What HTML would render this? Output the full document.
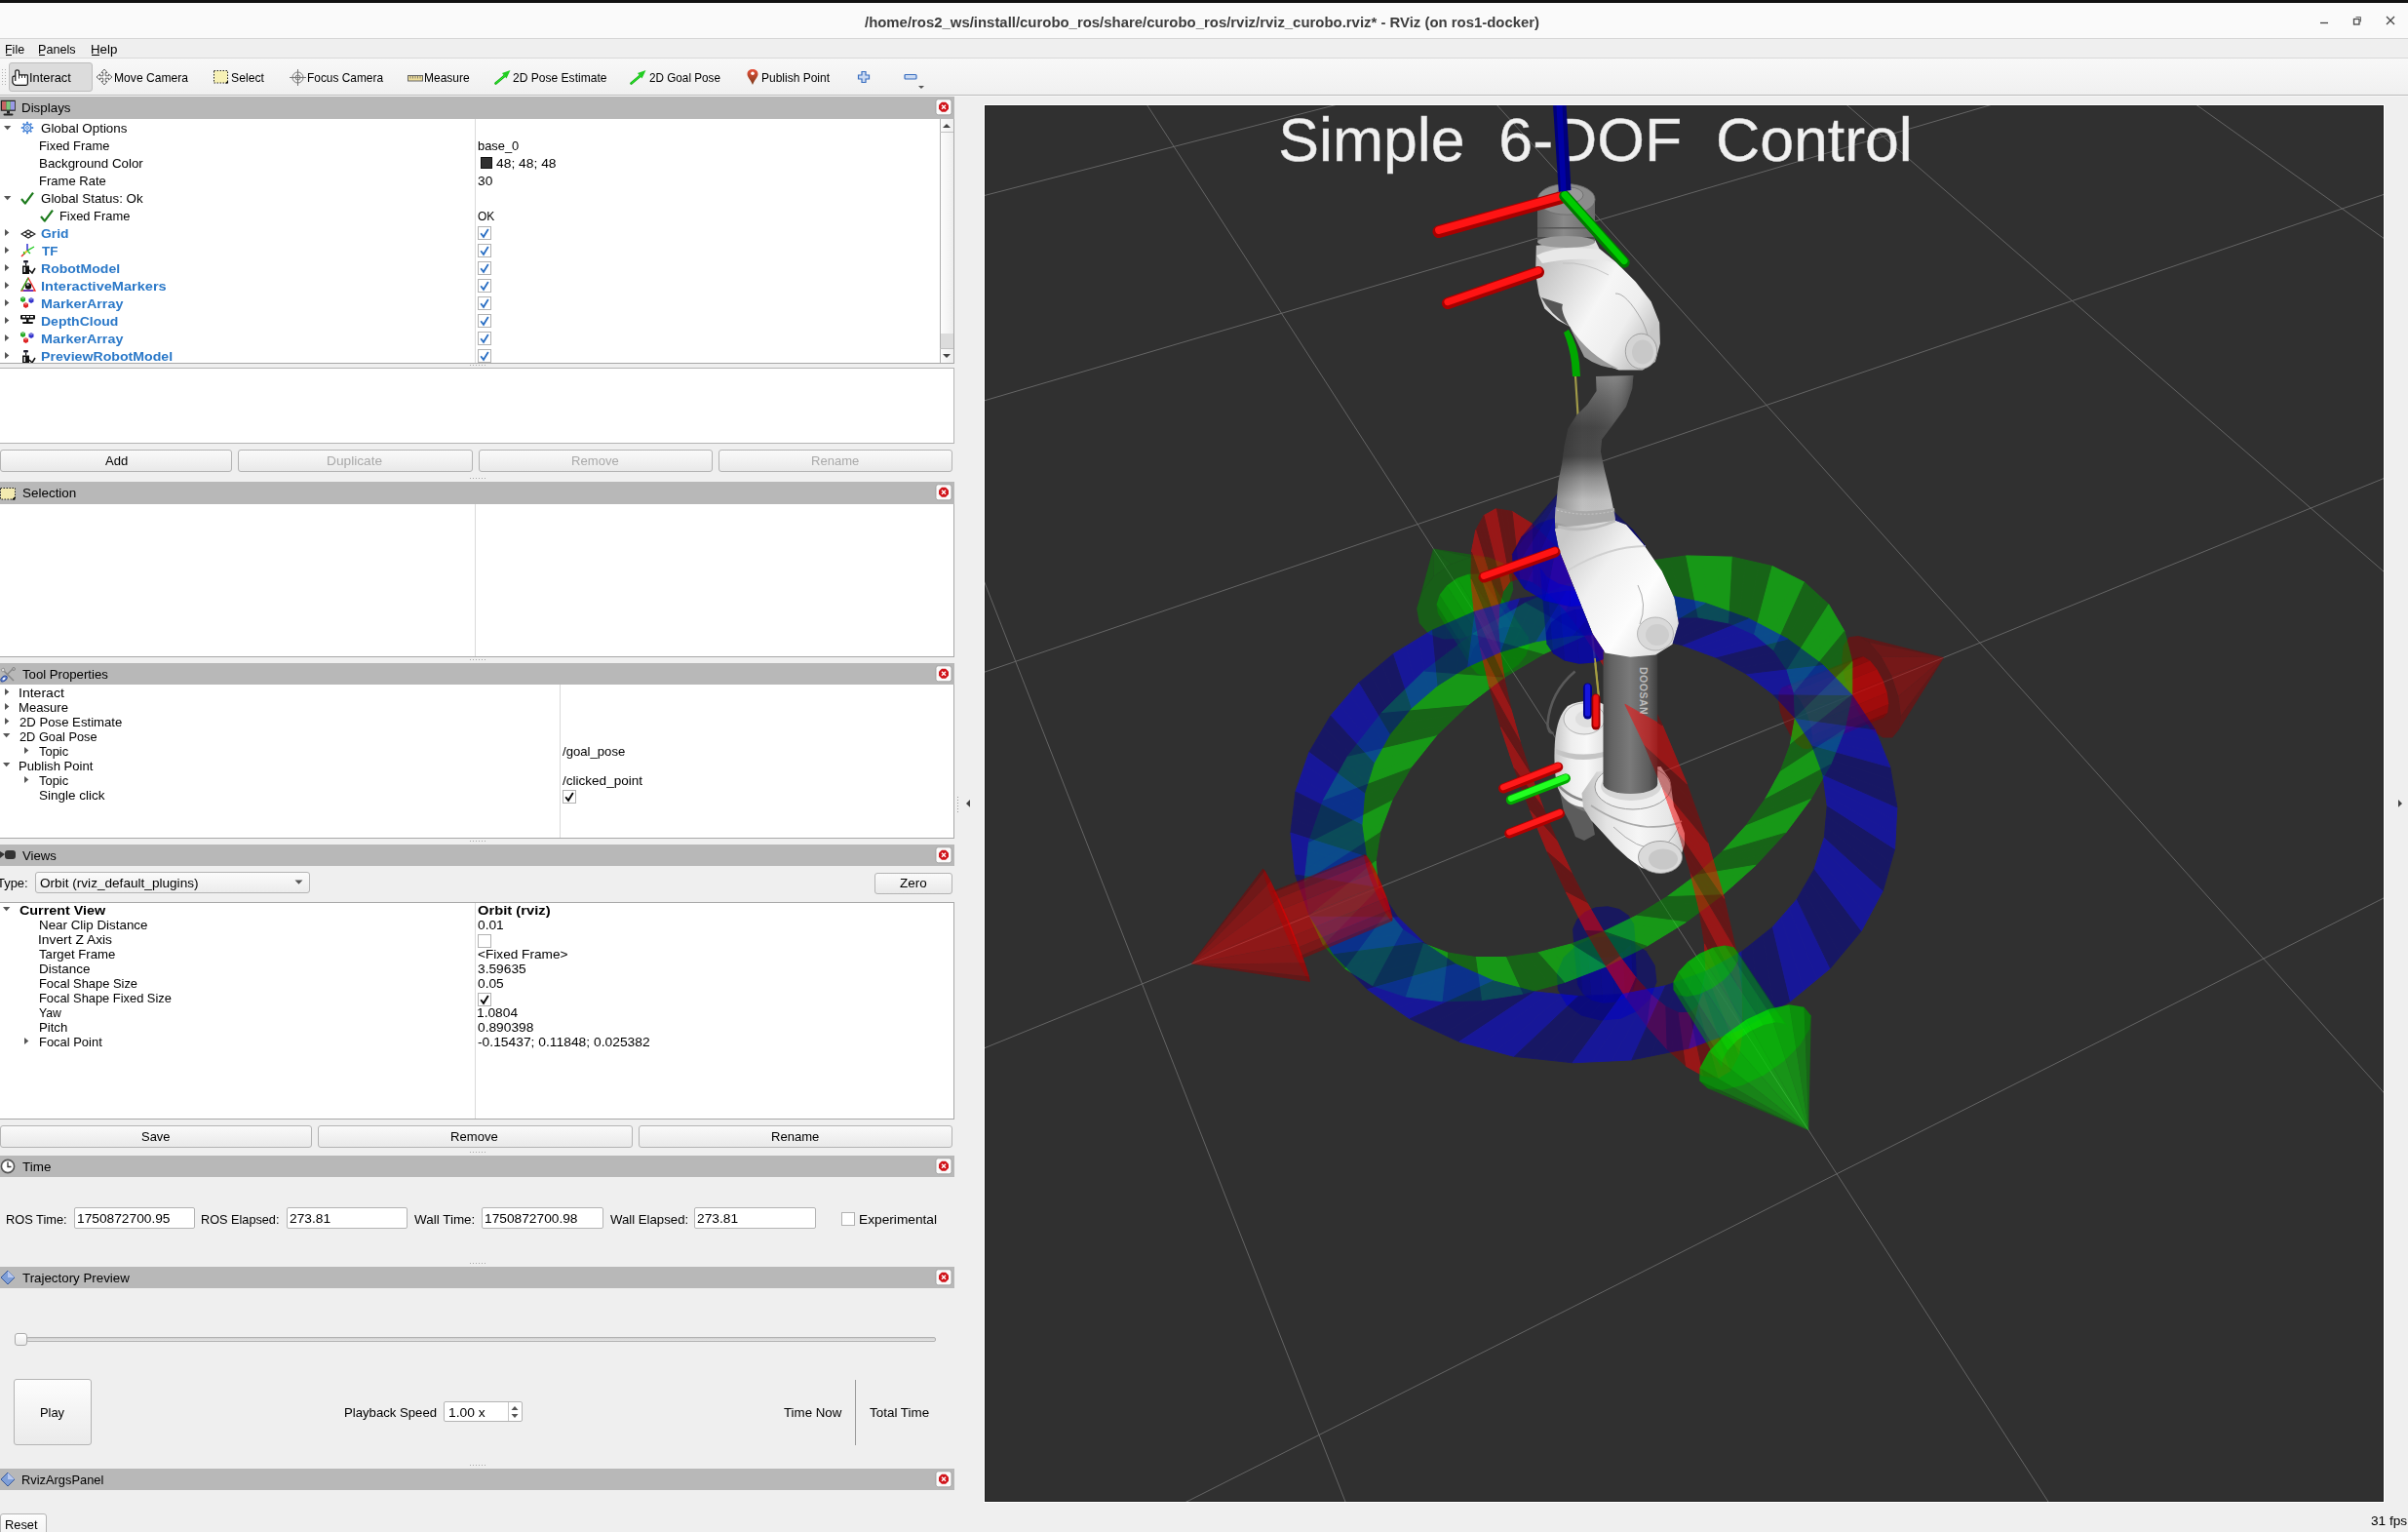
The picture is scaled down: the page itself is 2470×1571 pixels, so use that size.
<!DOCTYPE html>
<html><head><meta charset="utf-8"><style>
html,body{margin:0;padding:0;}
body{width:2470px;height:1571px;position:relative;overflow:hidden;background:#efefef;font-family:"Liberation Sans",sans-serif;}
body>div{position:absolute;}
.t{position:absolute;white-space:pre;transform-origin:0 0;}
div>div{position:absolute;}
</style></head><body>
<div style="left:0px;top:0px;width:2470px;height:3px;background:#121212"></div>
<div style="left:0px;top:3px;width:2470px;height:36px;background:#fafafa"></div>
<div style="left:0px;top:39px;width:2470px;height:1px;background:#d6d6d6"></div>
<div class="t" style="left:886.5px;top:14.50px;font-size:15px;line-height:15px;font-weight:bold;color:#3d3d3d;transform:scaleX(0.9939)">/home/ros2_ws/install/curobo_ros/share/curobo_ros/rviz/rviz_curobo.rviz* - RViz (on ros1-docker)</div>
<svg style="position:absolute;left:2370px;top:10px" width="100" height="25"><g stroke="#474747" fill="none" stroke-width="1.3"><line x1="10" y1="13.5" x2="18" y2="13.5"/><rect x="44.5" y="9.5" width="5.5" height="5.5"/><polyline points="46.5,7.5 51.5,7.5 51.5,12.5" stroke-width="0.8"/><line x1="78" y1="7" x2="86" y2="15"/><line x1="86" y1="7" x2="78" y2="15"/></g></svg>
<div style="left:0px;top:40px;width:2470px;height:19px;background:#efefef"></div>
<div style="left:0px;top:59px;width:2470px;height:1px;background:#d9d9d9"></div>
<div class="t" style="left:5.18px;top:43.50px;font-size:13.0px;line-height:13.0px;color:#000;transform:scaleX(0.9586);">File</div>
<div style="left:6px;top:56px;width:6px;height:1px;background:#000"></div>
<div class="t" style="left:39.16px;top:43.50px;font-size:13.0px;line-height:13.0px;color:#000;transform:scaleX(0.9722);">Panels</div>
<div style="left:40px;top:56px;width:6px;height:1px;background:#000"></div>
<div class="t" style="left:93.11px;top:43.50px;font-size:13.0px;line-height:13.0px;color:#000;transform:scaleX(1.0239);">Help</div>
<div style="left:94px;top:56px;width:8px;height:1px;background:#000"></div>
<div style="left:0px;top:60px;width:2470px;height:37px;background:linear-gradient(#f8f8f8,#f0f0f0)"></div>
<div style="left:0px;top:97px;width:2470px;height:1px;background:#bcbcbc"></div>
<div style="left:0px;top:98px;width:2470px;height:1px;background:#f7f7f7"></div>
<svg style="position:absolute;left:0;top:68px" width="8" height="22"><rect x="2" y="3" width="1" height="1" fill="#b0b0b0"/><rect x="5" y="3" width="1" height="1" fill="#b0b0b0"/><rect x="2" y="6" width="1" height="1" fill="#b0b0b0"/><rect x="5" y="6" width="1" height="1" fill="#b0b0b0"/><rect x="2" y="9" width="1" height="1" fill="#b0b0b0"/><rect x="5" y="9" width="1" height="1" fill="#b0b0b0"/><rect x="2" y="12" width="1" height="1" fill="#b0b0b0"/><rect x="5" y="12" width="1" height="1" fill="#b0b0b0"/><rect x="2" y="15" width="1" height="1" fill="#b0b0b0"/><rect x="5" y="15" width="1" height="1" fill="#b0b0b0"/><rect x="2" y="18" width="1" height="1" fill="#b0b0b0"/><rect x="5" y="18" width="1" height="1" fill="#b0b0b0"/></svg>
<div style="left:9px;top:64px;width:86px;height:30px;background:#dcdcdc;border:1px solid #bdbdbd;border-radius:3px;box-sizing:border-box"></div>
<svg style="position:absolute;left:11.5px;top:70.5px" width="18" height="18" viewBox="0 0 18 18"><path d="M3.8 12 V2 Q3.8 0.8 5.65 0.8 Q7.5 0.8 7.5 2 V5.8 H15.6 Q16.4 5.8 16.4 6.6 V14.6 Q16.4 16.4 14.7 16.4 H4.2 Q2.8 16.4 1.9 15.2 L0.9 13.6 V8.6 Q0.9 7.2 2.3 7.2 H3.8" fill="#fff" stroke="#111" stroke-width="1.2" stroke-linejoin="round"/><path d="M7.5 5.8 V9.6 M10.5 5.8 V9 M13.5 5.8 V9" stroke="#222" stroke-width="0.9"/></svg>
<div class="t" style="left:30.01px;top:74.61px;font-size:11.92px;line-height:11.92px;color:#000;transform:scaleX(1.0794);">Interact</div>
<svg style="position:absolute;left:98px;top:70px" width="18" height="18" viewBox="0 0 18 18"><g fill="#fff" stroke="#555" stroke-width="0.9"><path d="M9 1 L12 4.5 L10.2 4.5 L10.2 7.8 L13.5 7.8 L13.5 6 L17 9 L13.5 12 L13.5 10.2 L10.2 10.2 L10.2 13.5 L12 13.5 L9 17 L6 13.5 L7.8 13.5 L7.8 10.2 L4.5 10.2 L4.5 12 L1 9 L4.5 6 L4.5 7.8 L7.8 7.8 L7.8 4.5 L6 4.5 Z"/></g></svg>
<div class="t" style="left:116.71px;top:74.61px;font-size:11.92px;line-height:11.92px;color:#000;transform:scaleX(1.0174);">Move Camera</div>
<svg style="position:absolute;left:218px;top:71px" width="18" height="16"><rect x="1.5" y="1.5" width="14" height="12.5" fill="#f7f1b5" stroke="#222" stroke-width="1" stroke-dasharray="1.5,1.5"/><path d="M13 14.5 L16 11.5 L16 14.5 Z" fill="#000"/></svg>
<div class="t" style="left:237.15px;top:74.61px;font-size:11.92px;line-height:11.92px;color:#000;transform:scaleX(1.0244);">Select</div>
<svg style="position:absolute;left:296px;top:70px" width="19" height="19" viewBox="0 0 19 19"><g fill="none" stroke="#777" stroke-width="1"><circle cx="9.5" cy="9.5" r="5.5"/><circle cx="9.5" cy="9.5" r="2.5"/><line x1="9.5" y1="1" x2="9.5" y2="18"/><line x1="1" y1="9.5" x2="18" y2="9.5"/></g></svg>
<div class="t" style="left:315.42px;top:74.61px;font-size:11.92px;line-height:11.92px;color:#000;transform:scaleX(0.9989);">Focus Camera</div>
<svg style="position:absolute;left:417px;top:76px" width="18" height="9"><rect x="1.5" y="1.5" width="15" height="5.5" fill="#eedd9a" stroke="#666" stroke-width="1"/><g stroke="#666" stroke-width="0.8"><line x1="4.0" y1="2" x2="4.0" y2="4.5"/><line x1="6.5" y1="2" x2="6.5" y2="4.5"/><line x1="9.0" y1="2" x2="9.0" y2="4.5"/><line x1="11.5" y1="2" x2="11.5" y2="4.5"/><line x1="14.0" y1="2" x2="14.0" y2="4.5"/></g></svg>
<div class="t" style="left:435.21px;top:74.61px;font-size:11.92px;line-height:11.92px;color:#000;transform:scaleX(1.0078);">Measure</div>
<svg style="position:absolute;left:507px;top:71px" width="18" height="16" viewBox="0 0 18 16"><path d="M1.5 14.5 L11 6.5" stroke="#1a1" stroke-width="2.6" stroke-linecap="round"/><path d="M16.5 1 L8 4 L12.5 9.5 Z" fill="#2c2"/><path d="M1.5 14.5 L11 6.5" stroke="#3f3" stroke-width="1"/></svg>
<div class="t" style="left:525.99px;top:74.61px;font-size:11.92px;line-height:11.92px;color:#000;transform:scaleX(1.0121);">2D Pose Estimate</div>
<svg style="position:absolute;left:646px;top:71px" width="18" height="16" viewBox="0 0 18 16"><path d="M1.5 14.5 L11 6.5" stroke="#1a1" stroke-width="2.6" stroke-linecap="round"/><path d="M16.5 1 L8 4 L12.5 9.5 Z" fill="#2c2"/><path d="M1.5 14.5 L11 6.5" stroke="#3f3" stroke-width="1"/></svg>
<div class="t" style="left:665.61px;top:74.61px;font-size:11.92px;line-height:11.92px;color:#000;transform:scaleX(0.9840);">2D Goal Pose</div>
<svg style="position:absolute;left:765px;top:70px" width="14" height="18" viewBox="0 0 14 18"><defs><linearGradient id="pin" x1="0" y1="0" x2="0" y2="1"><stop offset="0" stop-color="#e8503a"/><stop offset="1" stop-color="#7a3a1a"/></linearGradient></defs><path d="M7 17 C5 12 1.5 9 1.5 6 C1.5 2.8 4 1 7 1 C10 1 12.5 2.8 12.5 6 C12.5 9 9 12 7 17 Z" fill="url(#pin)"/><circle cx="7" cy="5.2" r="1.8" fill="#fff"/></svg>
<div class="t" style="left:781.22px;top:74.61px;font-size:11.92px;line-height:11.92px;color:#000;transform:scaleX(1.0070);">Publish Point</div>
<svg style="position:absolute;left:878px;top:71px" width="16" height="16"><path d="M6 2.5 H10 V6 H13.5 V10 H10 V13.5 H6 V10 H2.5 V6 H6 Z" fill="#c9d9f2" stroke="#3b6fc0" stroke-width="1.2"/></svg>
<svg style="position:absolute;left:926px;top:75px" width="16" height="8"><rect x="2" y="1.5" width="12" height="4.5" rx="1" fill="#c9d9f2" stroke="#3b6fc0" stroke-width="1.2"/></svg>
<svg style="position:absolute;left:941px;top:87px" width="8" height="5"><path d="M1 1 H7 L4 4 Z" fill="#555"/></svg>
<div style="left:0px;top:99px;width:979px;height:23px;background:#b8b8b8"></div>
<div class="t" style="left:22.10px;top:103.80px;font-size:13.0px;line-height:13.0px;color:#000;transform:scaleX(1.0277);">Displays</div>
<svg style="position:absolute;left:0;top:102px" width="17" height="18" viewBox="0 0 17 18"><rect x="0.8" y="0.8" width="15" height="11" fill="#222"/><rect x="2" y="2" width="4.4" height="8.6" fill="#c86464"/><rect x="6.4" y="2" width="4.4" height="8.6" fill="#7cc87c"/><rect x="10.8" y="2" width="4.2" height="8.6" fill="#9a9ae6"/><rect x="7" y="12" width="3" height="2.5" fill="#222"/><rect x="3.5" y="14.5" width="10" height="2" rx="1" fill="#222"/></svg>
<svg style="position:absolute;left:959px;top:101px" width="18" height="18" viewBox="0 0 18 18"><rect x="1" y="0.8" width="16" height="16" rx="2.5" fill="#fbfbfb" stroke="#9a9a9a" stroke-width="0.8"/><path d="M7 3.8 H11 L14 6.8 V10.8 L11 13.8 H7 L4 10.8 V6.8 Z" fill="#d0141a"/><path d="M7 6.8 L11 10.8 M11 6.8 L7 10.8" stroke="#fff" stroke-width="1.4"/></svg>
<div style="left:0px;top:122px;width:964px;height:251px;background:#fff"></div>
<div style="left:487px;top:122px;width:1px;height:251px;background:#dadada"></div>
<div style="left:0px;top:372px;width:979px;height:1px;background:#a8a8a8"></div>
<div style="left:978px;top:122px;width:1px;height:251px;background:#a8a8a8"></div>
<div style="left:964px;top:122px;width:14px;height:250px;background:linear-gradient(90deg,#fcfcfc,#eeeeee);border-left:1px solid #b0b0b0;box-sizing:border-box"></div>
<div style="left:964px;top:135px;width:14px;height:1px;background:#c0c0c0"></div>
<div style="left:965px;top:342px;width:13px;height:16px;background:#dcdcdc"></div>
<div style="left:964px;top:357px;width:14px;height:1px;background:#c0c0c0"></div>
<svg style="position:absolute;left:966px;top:125px" width="10" height="8"><path d="M1 6 H9 L5 2 Z" fill="#444"/></svg>
<svg style="position:absolute;left:966px;top:361px" width="10" height="8"><path d="M1 2 H9 L5 6 Z" fill="#444"/></svg>
<svg style="position:absolute;left:3.6px;top:128.5px" width="8" height="5"><path d="M0 0 H7.3 L3.65 4.2 Z" fill="#555"/></svg>
<svg style="position:absolute;left:20.5px;top:123.5px" width="14" height="14" viewBox="0 0 14 14"><g fill="none" stroke="#4a86d8" stroke-width="1.6"><circle cx="7" cy="7" r="3.6"/><circle cx="7" cy="7" r="1.4" stroke-width="1"/></g><g stroke="#4a86d8" stroke-width="2"><line x1="11.20" y1="7.00" x2="13.20" y2="7.00"/><line x1="9.97" y1="9.97" x2="11.38" y2="11.38"/><line x1="7.00" y1="11.20" x2="7.00" y2="13.20"/><line x1="4.03" y1="9.97" x2="2.62" y2="11.38"/><line x1="2.80" y1="7.00" x2="0.80" y2="7.00"/><line x1="4.03" y1="4.03" x2="2.62" y2="2.62"/><line x1="7.00" y1="2.80" x2="7.00" y2="0.80"/><line x1="9.97" y1="4.03" x2="11.38" y2="2.62"/></g></svg>
<div class="t" style="left:42.13px;top:125.00px;font-size:13.0px;line-height:13.0px;color:#000;transform:scaleX(1.0281);">Global Options</div>
<div class="t" style="left:39.64px;top:143.00px;font-size:13.0px;line-height:13.0px;color:#000;transform:scaleX(0.9914);">Fixed Frame</div>
<div class="t" style="left:489.97px;top:143.00px;font-size:13.0px;line-height:13.0px;color:#000;transform:scaleX(0.9911);">base_0</div>
<div class="t" style="left:39.61px;top:161.00px;font-size:13.0px;line-height:13.0px;color:#000;transform:scaleX(1.0261);">Background Color</div>
<div style="left:493px;top:161px;width:12px;height:12px;background:#303030;border:1px solid #111;box-sizing:border-box"></div>
<div class="t" style="left:509.48px;top:161.00px;font-size:13.0px;line-height:13.0px;color:#000;transform:scaleX(1.0647);">48; 48; 48</div>
<div class="t" style="left:39.63px;top:179.00px;font-size:13.0px;line-height:13.0px;color:#000;transform:scaleX(1.0018);">Frame Rate</div>
<div class="t" style="left:490.28px;top:179.00px;font-size:13.0px;line-height:13.0px;color:#000;transform:scaleX(1.0569);">30</div>
<svg style="position:absolute;left:3.6px;top:200.5px" width="8" height="5"><path d="M0 0 H7.3 L3.65 4.2 Z" fill="#555"/></svg>
<svg style="position:absolute;left:20.8px;top:195.5px" width="14" height="14"><path d="M1 8 L4.8 12.6 L13 1.6" fill="none" stroke="#1c7a1c" stroke-width="2.2" stroke-linejoin="round"/></svg>
<div class="t" style="left:42.13px;top:197.00px;font-size:13.0px;line-height:13.0px;color:#000;transform:scaleX(1.0268);">Global Status: Ok</div>
<svg style="position:absolute;left:40.8px;top:213.5px" width="14" height="14"><path d="M1 8 L4.8 12.6 L13 1.6" fill="none" stroke="#1c7a1c" stroke-width="2.2" stroke-linejoin="round"/></svg>
<div class="t" style="left:61.44px;top:215.00px;font-size:13.0px;line-height:13.0px;color:#000;transform:scaleX(0.9914);">Fixed Frame</div>
<div class="t" style="left:490.23px;top:215.00px;font-size:13.0px;line-height:13.0px;color:#000;transform:scaleX(0.9225);">OK</div>
<svg style="position:absolute;left:4.6px;top:235.4px" width="5" height="8"><path d="M0 0 V7 L4.3 3.5 Z" fill="#555"/></svg>
<div class="t" style="left:42.23px;top:233.00px;font-size:13.0px;line-height:13.0px;font-weight:bold;color:#2a78c8;transform:scaleX(1.0653);">Grid</div>
<svg style="position:absolute;left:490px;top:232.4px" width="14" height="14"><rect x="0.5" y="0.5" width="13" height="13" fill="#fff" stroke="#b2b2b2"/><path d="M3.2 7.2 L6 10.8 L10.8 3" fill="none" stroke="#2a6fc4" stroke-width="1.8"/></svg>
<svg style="position:absolute;left:4.6px;top:253.4px" width="5" height="8"><path d="M0 0 V7 L4.3 3.5 Z" fill="#555"/></svg>
<div class="t" style="left:42.65px;top:251.00px;font-size:13.0px;line-height:13.0px;font-weight:bold;color:#2a78c8;transform:scaleX(1.0321);">TF</div>
<svg style="position:absolute;left:490px;top:250.4px" width="14" height="14"><rect x="0.5" y="0.5" width="13" height="13" fill="#fff" stroke="#b2b2b2"/><path d="M3.2 7.2 L6 10.8 L10.8 3" fill="none" stroke="#2a6fc4" stroke-width="1.8"/></svg>
<svg style="position:absolute;left:4.6px;top:271.4px" width="5" height="8"><path d="M0 0 V7 L4.3 3.5 Z" fill="#555"/></svg>
<div class="t" style="left:41.86px;top:269.00px;font-size:13.0px;line-height:13.0px;font-weight:bold;color:#2a78c8;transform:scaleX(1.0800);">RobotModel</div>
<svg style="position:absolute;left:490px;top:268.4px" width="14" height="14"><rect x="0.5" y="0.5" width="13" height="13" fill="#fff" stroke="#b2b2b2"/><path d="M3.2 7.2 L6 10.8 L10.8 3" fill="none" stroke="#2a6fc4" stroke-width="1.8"/></svg>
<svg style="position:absolute;left:4.6px;top:289.4px" width="5" height="8"><path d="M0 0 V7 L4.3 3.5 Z" fill="#555"/></svg>
<div class="t" style="left:41.83px;top:287.00px;font-size:13.0px;line-height:13.0px;font-weight:bold;color:#2a78c8;transform:scaleX(1.1197);">InteractiveMarkers</div>
<svg style="position:absolute;left:490px;top:286.4px" width="14" height="14"><rect x="0.5" y="0.5" width="13" height="13" fill="#fff" stroke="#b2b2b2"/><path d="M3.2 7.2 L6 10.8 L10.8 3" fill="none" stroke="#2a6fc4" stroke-width="1.8"/></svg>
<svg style="position:absolute;left:4.6px;top:307.4px" width="5" height="8"><path d="M0 0 V7 L4.3 3.5 Z" fill="#555"/></svg>
<div class="t" style="left:41.84px;top:305.00px;font-size:13.0px;line-height:13.0px;font-weight:bold;color:#2a78c8;transform:scaleX(1.1011);">MarkerArray</div>
<svg style="position:absolute;left:490px;top:304.4px" width="14" height="14"><rect x="0.5" y="0.5" width="13" height="13" fill="#fff" stroke="#b2b2b2"/><path d="M3.2 7.2 L6 10.8 L10.8 3" fill="none" stroke="#2a6fc4" stroke-width="1.8"/></svg>
<svg style="position:absolute;left:4.6px;top:325.4px" width="5" height="8"><path d="M0 0 V7 L4.3 3.5 Z" fill="#555"/></svg>
<div class="t" style="left:41.86px;top:323.00px;font-size:13.0px;line-height:13.0px;font-weight:bold;color:#2a78c8;transform:scaleX(1.0767);">DepthCloud</div>
<svg style="position:absolute;left:490px;top:322.4px" width="14" height="14"><rect x="0.5" y="0.5" width="13" height="13" fill="#fff" stroke="#b2b2b2"/><path d="M3.2 7.2 L6 10.8 L10.8 3" fill="none" stroke="#2a6fc4" stroke-width="1.8"/></svg>
<svg style="position:absolute;left:4.6px;top:343.4px" width="5" height="8"><path d="M0 0 V7 L4.3 3.5 Z" fill="#555"/></svg>
<div class="t" style="left:41.84px;top:341.00px;font-size:13.0px;line-height:13.0px;font-weight:bold;color:#2a78c8;transform:scaleX(1.1011);">MarkerArray</div>
<svg style="position:absolute;left:490px;top:340.4px" width="14" height="14"><rect x="0.5" y="0.5" width="13" height="13" fill="#fff" stroke="#b2b2b2"/><path d="M3.2 7.2 L6 10.8 L10.8 3" fill="none" stroke="#2a6fc4" stroke-width="1.8"/></svg>
<svg style="position:absolute;left:4.6px;top:361.4px" width="5" height="8"><path d="M0 0 V7 L4.3 3.5 Z" fill="#555"/></svg>
<div class="t" style="left:41.85px;top:359.00px;font-size:13.0px;line-height:13.0px;font-weight:bold;color:#2a78c8;transform:scaleX(1.0877);">PreviewRobotModel</div>
<svg style="position:absolute;left:490px;top:358.4px" width="14" height="14"><rect x="0.5" y="0.5" width="13" height="13" fill="#fff" stroke="#b2b2b2"/><path d="M3.2 7.2 L6 10.8 L10.8 3" fill="none" stroke="#2a6fc4" stroke-width="1.8"/></svg>
<svg style="position:absolute;left:20.5px;top:234px" width="16" height="16" viewBox="0 0 16 16"><g fill="none" stroke="#222" stroke-width="1.2"><path d="M1 6 L8 2 L15 6 L8 10 Z"/><path d="M4.5 4 L11.5 8 M11.5 4 L4.5 8"/></g></svg>
<svg style="position:absolute;left:20px;top:248px" width="16" height="16" viewBox="0 0 16 16"><g stroke-width="1.4" fill="none"><path d="M8 9 L2 15" stroke="#e22"/><path d="M8 9 L15 5" stroke="#2c2"/><path d="M8 9 L8 2" stroke="#22c"/><path d="M5 13 L4.5 10 M8 9 L11 12" stroke="#2c2"/><path d="M5.5 11.5 L8 9" stroke="#dd2"/></g></svg>
<svg style="position:absolute;left:20.5px;top:266px" width="16" height="16" viewBox="0 0 16 16"><g fill="#111"><rect x="3" y="1" width="5" height="2.5" rx="1" fill="#223"/><rect x="5" y="3.5" width="1.2" height="3"/><rect x="2" y="6.5" width="7" height="8.5"/><path d="M9 11 L12 14 L15 9" stroke="#111" stroke-width="1.5" fill="none"/></g><rect x="3.5" y="8" width="1.5" height="5" fill="#eee"/></svg>
<svg style="position:absolute;left:20.5px;top:284px" width="16" height="16" viewBox="0 0 16 16"><path d="M8 1 L15 14 H1 Z" fill="none" stroke="#e22" stroke-width="1.3"/><path d="M8 1 L1 14" stroke="#2b2" stroke-width="1.3"/><path d="M3 14 H13" stroke="#22e" stroke-width="1.3"/><circle cx="8" cy="9.5" r="3.2" fill="#111"/><circle cx="7.5" cy="8" r="1.3" fill="#aaa"/></svg>
<svg style="position:absolute;left:20px;top:303px" width="16" height="16" viewBox="0 0 16 16"><path d="M1 2.5 L3.5 1 L6 2.5 V5.5 L3.5 7 L1 5.5 Z" fill="#2a2"/><path d="M9.5 3.5 L12 2 L14.5 3.5 V6.5 L12 8 L9.5 6.5 Z" fill="#33c"/><path d="M4 8.5 L6.5 7 L9 8.5 V11.5 L6.5 13 L4 11.5 Z" fill="#d22"/><path d="M1 2.5 L3.5 4 L6 2.5 L3.5 1 Z M9.5 3.5 L12 5 L14.5 3.5 L12 2Z M4 8.5 L6.5 10 L9 8.5 L6.5 7 Z" fill="#fff" opacity="0.35"/></svg>
<svg style="position:absolute;left:20px;top:339px" width="16" height="16" viewBox="0 0 16 16"><path d="M1 2.5 L3.5 1 L6 2.5 V5.5 L3.5 7 L1 5.5 Z" fill="#2a2"/><path d="M9.5 3.5 L12 2 L14.5 3.5 V6.5 L12 8 L9.5 6.5 Z" fill="#33c"/><path d="M4 8.5 L6.5 7 L9 8.5 V11.5 L6.5 13 L4 11.5 Z" fill="#d22"/><path d="M1 2.5 L3.5 4 L6 2.5 L3.5 1 Z M9.5 3.5 L12 5 L14.5 3.5 L12 2Z M4 8.5 L6.5 10 L9 8.5 L6.5 7 Z" fill="#fff" opacity="0.35"/></svg>
<svg style="position:absolute;left:20px;top:321px" width="16" height="16" viewBox="0 0 16 16"><rect x="1" y="2" width="15" height="4.5" rx="1" fill="#111"/><rect x="3" y="3" width="3" height="1.6" fill="#fff"/><rect x="7" y="3" width="3" height="1.6" fill="#fff"/><rect x="11" y="3" width="3" height="1.6" fill="#fff"/><rect x="7" y="6" width="2.5" height="3" fill="#111"/><rect x="3" y="9" width="11" height="2" rx="1" fill="#111"/></svg>
<div style="left:20px;top:357px;width:17px;height:15px;overflow:hidden"><svg width="16" height="16" style="position:absolute;left:0.5px;top:1px"><g fill="#111"><rect x="3" y="1" width="5" height="2.5" rx="1" fill="#223"/><rect x="5" y="3.5" width="1.2" height="3"/><rect x="2" y="6.5" width="7" height="8.5"/><path d="M9 11 L12 14 L15 9" stroke="#111" stroke-width="1.5" fill="none"/></g><rect x="3.5" y="8" width="1.5" height="5" fill="#eee"/></svg></div>
<svg style="position:absolute;left:482px;top:374px" width="20" height="2"><rect x="0" y="0" width="1" height="1" fill="#a8a8a8"/><rect x="3" y="0" width="1" height="1" fill="#a8a8a8"/><rect x="6" y="0" width="1" height="1" fill="#a8a8a8"/><rect x="9" y="0" width="1" height="1" fill="#a8a8a8"/><rect x="12" y="0" width="1" height="1" fill="#a8a8a8"/><rect x="15" y="0" width="1" height="1" fill="#a8a8a8"/></svg>
<div style="left:0px;top:377px;width:979px;height:78px;background:#fff;border:1px solid #b4b4b4;border-left:none;box-sizing:border-box"></div>
<div style="left:0px;top:461px;width:238px;height:23px;background:linear-gradient(#fafafa,#e9e9e9);border:1px solid #b4b4b4;border-radius:3px;box-sizing:border-box"></div>
<div class="t" style="left:107.55px;top:466.00px;font-size:13.0px;line-height:13.0px;color:#000;transform:scaleX(1.0052);">Add</div>
<div style="left:244px;top:461px;width:241px;height:23px;background:linear-gradient(#fafafa,#e9e9e9);border:1px solid #b4b4b4;border-radius:3px;box-sizing:border-box"></div>
<div class="t" style="left:334.99px;top:466.00px;font-size:13.0px;line-height:13.0px;color:#a9a9a9;transform:scaleX(1.0550);">Duplicate</div>
<div style="left:491px;top:461px;width:240px;height:23px;background:linear-gradient(#fafafa,#e9e9e9);border:1px solid #b4b4b4;border-radius:3px;box-sizing:border-box"></div>
<div class="t" style="left:585.76px;top:466.00px;font-size:13.0px;line-height:13.0px;color:#a9a9a9;transform:scaleX(1.0068);">Remove</div>
<div style="left:737px;top:461px;width:240px;height:23px;background:linear-gradient(#fafafa,#e9e9e9);border:1px solid #b4b4b4;border-radius:3px;box-sizing:border-box"></div>
<div class="t" style="left:831.51px;top:466.00px;font-size:13.0px;line-height:13.0px;color:#a9a9a9;transform:scaleX(1.0024);">Rename</div>
<svg style="position:absolute;left:482px;top:490px" width="20" height="2"><rect x="0" y="0" width="1" height="1" fill="#a8a8a8"/><rect x="3" y="0" width="1" height="1" fill="#a8a8a8"/><rect x="6" y="0" width="1" height="1" fill="#a8a8a8"/><rect x="9" y="0" width="1" height="1" fill="#a8a8a8"/><rect x="12" y="0" width="1" height="1" fill="#a8a8a8"/><rect x="15" y="0" width="1" height="1" fill="#a8a8a8"/></svg>
<div style="left:0px;top:494px;width:979px;height:23px;background:#b8b8b8"></div>
<div class="t" style="left:22.59px;top:498.80px;font-size:13.0px;line-height:13.0px;color:#000;transform:scaleX(1.0343);">Selection</div>
<svg style="position:absolute;left:0;top:500px" width="16" height="13"><rect x="0.5" y="0.5" width="15" height="11.5" fill="#f3eab0" stroke="#222" stroke-width="1" stroke-dasharray="1.5,1.5"/><path d="M12 12.5 L15.5 9 V12.5 Z" fill="#000"/></svg>
<svg style="position:absolute;left:959px;top:496px" width="18" height="18" viewBox="0 0 18 18"><rect x="1" y="0.8" width="16" height="16" rx="2.5" fill="#fbfbfb" stroke="#9a9a9a" stroke-width="0.8"/><path d="M7 3.8 H11 L14 6.8 V10.8 L11 13.8 H7 L4 10.8 V6.8 Z" fill="#d0141a"/><path d="M7 6.8 L11 10.8 M11 6.8 L7 10.8" stroke="#fff" stroke-width="1.4"/></svg>
<div style="left:0px;top:517px;width:979px;height:157px;background:#fff;border:1px solid #a8a8a8;border-left:none;border-top:none;box-sizing:border-box"></div>
<div style="left:487px;top:517px;width:1px;height:156px;background:#dadada"></div>
<svg style="position:absolute;left:482px;top:676px" width="20" height="2"><rect x="0" y="0" width="1" height="1" fill="#a8a8a8"/><rect x="3" y="0" width="1" height="1" fill="#a8a8a8"/><rect x="6" y="0" width="1" height="1" fill="#a8a8a8"/><rect x="9" y="0" width="1" height="1" fill="#a8a8a8"/><rect x="12" y="0" width="1" height="1" fill="#a8a8a8"/><rect x="15" y="0" width="1" height="1" fill="#a8a8a8"/></svg>
<div style="left:0px;top:680px;width:979px;height:22px;background:#b8b8b8"></div>
<div class="t" style="left:22.90px;top:684.80px;font-size:13.0px;line-height:13.0px;color:#000;transform:scaleX(1.0126);">Tool Properties</div>
<svg style="position:absolute;left:0;top:684px" width="16" height="16" viewBox="0 0 16 16"><path d="M3 3 L14 14" stroke="#888" stroke-width="1.6"/><path d="M13 2 L7 8" stroke="#888" stroke-width="1.4"/><circle cx="14" cy="2" r="1.5" fill="none" stroke="#888"/><path d="M1 2.5 L4 1 L5 4 L2.5 5 Z" fill="#ddd" stroke="#888" stroke-width="0.8"/><ellipse cx="4" cy="12" rx="3.6" ry="2.2" transform="rotate(-40 4 12)" fill="#6a8ad8" stroke="#2a4a9a" stroke-width="1"/><ellipse cx="4" cy="12" rx="1.6" ry="0.9" transform="rotate(-40 4 12)" fill="#fff"/></svg>
<svg style="position:absolute;left:959px;top:682px" width="18" height="18" viewBox="0 0 18 18"><rect x="1" y="0.8" width="16" height="16" rx="2.5" fill="#fbfbfb" stroke="#9a9a9a" stroke-width="0.8"/><path d="M7 3.8 H11 L14 6.8 V10.8 L11 13.8 H7 L4 10.8 V6.8 Z" fill="#d0141a"/><path d="M7 6.8 L11 10.8 M11 6.8 L7 10.8" stroke="#fff" stroke-width="1.4"/></svg>
<div style="left:0px;top:702px;width:979px;height:158px;background:#fff;border:1px solid #a8a8a8;border-left:none;border-top:none;box-sizing:border-box"></div>
<div style="left:574px;top:702px;width:1px;height:157px;background:#dadada"></div>
<svg style="position:absolute;left:4.8px;top:706.0px" width="5" height="8"><path d="M0 0 V7 L4.3 3.5 Z" fill="#555"/></svg>
<div class="t" style="left:19.20px;top:703.60px;font-size:13.0px;line-height:13.0px;color:#000;transform:scaleX(1.0806);">Interact</div>
<svg style="position:absolute;left:4.8px;top:721.05px" width="5" height="8"><path d="M0 0 V7 L4.3 3.5 Z" fill="#555"/></svg>
<div class="t" style="left:19.42px;top:718.65px;font-size:13.0px;line-height:13.0px;color:#000;transform:scaleX(1.0090);">Measure</div>
<svg style="position:absolute;left:4.8px;top:736.1px" width="5" height="8"><path d="M0 0 V7 L4.3 3.5 Z" fill="#555"/></svg>
<div class="t" style="left:19.84px;top:733.70px;font-size:13.0px;line-height:13.0px;color:#000;transform:scaleX(1.0121);">2D Pose Estimate</div>
<svg style="position:absolute;left:3.2px;top:752.25px" width="8" height="5"><path d="M0 0 H7.3 L3.65 4.2 Z" fill="#555"/></svg>
<div class="t" style="left:19.86px;top:748.75px;font-size:13.0px;line-height:13.0px;color:#000;transform:scaleX(0.9839);">2D Goal Pose</div>
<svg style="position:absolute;left:24.7px;top:766.2px" width="5" height="8"><path d="M0 0 V7 L4.3 3.5 Z" fill="#555"/></svg>
<div class="t" style="left:39.91px;top:763.80px;font-size:13.0px;line-height:13.0px;color:#000;transform:scaleX(0.9947);">Topic</div>
<div class="t" style="left:577.20px;top:763.80px;font-size:13.0px;line-height:13.0px;color:#000;transform:scaleX(1.0111);">/goal_pose</div>
<svg style="position:absolute;left:3.2px;top:782.35px" width="8" height="5"><path d="M0 0 H7.3 L3.65 4.2 Z" fill="#555"/></svg>
<div class="t" style="left:19.43px;top:778.85px;font-size:13.0px;line-height:13.0px;color:#000;transform:scaleX(1.0068);">Publish Point</div>
<svg style="position:absolute;left:24.7px;top:796.3000000000001px" width="5" height="8"><path d="M0 0 V7 L4.3 3.5 Z" fill="#555"/></svg>
<div class="t" style="left:39.91px;top:793.90px;font-size:13.0px;line-height:13.0px;color:#000;transform:scaleX(0.9947);">Topic</div>
<div class="t" style="left:577.20px;top:793.90px;font-size:13.0px;line-height:13.0px;color:#000;transform:scaleX(1.0417);">/clicked_point</div>
<div class="t" style="left:39.99px;top:808.95px;font-size:13.0px;line-height:13.0px;color:#000;transform:scaleX(1.0383);">Single click</div>
<svg style="position:absolute;left:577px;top:809.85px" width="14" height="14"><rect x="0.5" y="0.5" width="13" height="13" fill="#fff" stroke="#b2b2b2"/><path d="M3.2 7.2 L6 10.8 L10.8 3" fill="none" stroke="#000" stroke-width="1.8"/></svg>
<svg style="position:absolute;left:482px;top:862px" width="20" height="2"><rect x="0" y="0" width="1" height="1" fill="#a8a8a8"/><rect x="3" y="0" width="1" height="1" fill="#a8a8a8"/><rect x="6" y="0" width="1" height="1" fill="#a8a8a8"/><rect x="9" y="0" width="1" height="1" fill="#a8a8a8"/><rect x="12" y="0" width="1" height="1" fill="#a8a8a8"/><rect x="15" y="0" width="1" height="1" fill="#a8a8a8"/></svg>
<div style="left:0px;top:866px;width:979px;height:22px;background:#b8b8b8"></div>
<div class="t" style="left:23.14px;top:870.80px;font-size:13.0px;line-height:13.0px;color:#000;transform:scaleX(1.0080);">Views</div>
<svg style="position:absolute;left:0;top:871px" width="17" height="12"><path d="M0 2 L5 5 L0 9 Z" fill="#333"/><rect x="5" y="1" width="11" height="9" rx="3" fill="#333"/></svg>
<svg style="position:absolute;left:959px;top:868px" width="18" height="18" viewBox="0 0 18 18"><rect x="1" y="0.8" width="16" height="16" rx="2.5" fill="#fbfbfb" stroke="#9a9a9a" stroke-width="0.8"/><path d="M7 3.8 H11 L14 6.8 V10.8 L11 13.8 H7 L4 10.8 V6.8 Z" fill="#d0141a"/><path d="M7 6.8 L11 10.8 M11 6.8 L7 10.8" stroke="#fff" stroke-width="1.4"/></svg>
<div style="left:0;top:888px;width:979px;height:37px;overflow:hidden">
<div class="t" style="left:-2.69px;top:10.50px;font-size:13.0px;line-height:13.0px;color:#000;transform:scaleX(0.9947);">Type:</div>
</div>
<div style="left:35.8px;top:893.8px;width:282.7px;height:22.5px;background:linear-gradient(#fbfbfb,#ececec);border:1px solid #b4b4b4;border-radius:3px;box-sizing:border-box"></div>
<div class="t" style="left:40.76px;top:898.50px;font-size:13.0px;line-height:13.0px;color:#000;transform:scaleX(1.0462);">Orbit (rviz_default_plugins)</div>
<svg style="position:absolute;left:302px;top:902px" width="10" height="6"><path d="M0.5 0.5 H8.5 L4.5 4.8 Z" fill="#555"/></svg>
<div style="left:897px;top:894.5px;width:80px;height:22.0px;background:linear-gradient(#fafafa,#e9e9e9);border:1px solid #b4b4b4;border-radius:3px;box-sizing:border-box"></div>
<div class="t" style="left:922.96px;top:898.50px;font-size:13.0px;line-height:13.0px;color:#000;transform:scaleX(1.0336);">Zero</div>
<div style="left:0px;top:925px;width:979px;height:223px;background:#fff;border:1px solid #a8a8a8;border-left:none;box-sizing:border-box"></div>
<div style="left:487px;top:926px;width:1px;height:221px;background:#dadada"></div>
<svg style="position:absolute;left:3.2px;top:930.0px" width="8" height="5"><path d="M0 0 H7.3 L3.65 4.2 Z" fill="#555"/></svg>
<div class="t" style="left:20.11px;top:926.50px;font-size:13.0px;line-height:13.0px;font-weight:bold;color:#000;transform:scaleX(1.1035);">Current View</div>
<div class="t" style="left:489.80px;top:926.50px;font-size:13.0px;line-height:13.0px;font-weight:bold;color:#000;transform:scaleX(1.1343);">Orbit (rviz)</div>
<div class="t" style="left:39.60px;top:941.55px;font-size:13.0px;line-height:13.0px;color:#000;transform:scaleX(1.0282);">Near Clip Distance</div>
<div class="t" style="left:489.86px;top:941.55px;font-size:13.0px;line-height:13.0px;color:#000;transform:scaleX(1.0567);">0.01</div>
<div class="t" style="left:39.42px;top:956.60px;font-size:13.0px;line-height:13.0px;color:#000;transform:scaleX(1.0631);">Invert Z Axis</div>
<svg style="position:absolute;left:490px;top:957.5px" width="14" height="14"><rect x="0.5" y="0.5" width="13" height="13" fill="#fff" stroke="#b2b2b2"/></svg>
<div class="t" style="left:40.40px;top:971.65px;font-size:13.0px;line-height:13.0px;color:#000;transform:scaleX(1.0140);">Target Frame</div>
<div class="t" style="left:489.73px;top:971.65px;font-size:13.0px;line-height:13.0px;color:#000;transform:scaleX(1.0489);">&lt;Fixed Frame&gt;</div>
<div class="t" style="left:39.59px;top:986.70px;font-size:13.0px;line-height:13.0px;color:#000;transform:scaleX(1.0374);">Distance</div>
<div class="t" style="left:489.88px;top:986.70px;font-size:13.0px;line-height:13.0px;color:#000;transform:scaleX(1.0568);">3.59635</div>
<div class="t" style="left:39.64px;top:1001.75px;font-size:13.0px;line-height:13.0px;color:#000;transform:scaleX(0.9911);">Focal Shape Size</div>
<div class="t" style="left:489.86px;top:1001.75px;font-size:13.0px;line-height:13.0px;color:#000;transform:scaleX(1.0567);">0.05</div>
<div class="t" style="left:39.64px;top:1016.80px;font-size:13.0px;line-height:13.0px;color:#000;transform:scaleX(0.9899);">Focal Shape Fixed Size</div>
<svg style="position:absolute;left:490px;top:1017.6999999999999px" width="14" height="14"><rect x="0.5" y="0.5" width="13" height="13" fill="#fff" stroke="#b2b2b2"/><path d="M3.2 7.2 L6 10.8 L10.8 3" fill="none" stroke="#000" stroke-width="1.8"/></svg>
<div class="t" style="left:40.43px;top:1031.85px;font-size:13.0px;line-height:13.0px;color:#000;transform:scaleX(0.9391);">Yaw</div>
<div class="t" style="left:489.35px;top:1031.85px;font-size:13.0px;line-height:13.0px;color:#000;transform:scaleX(1.0568);">1.0804</div>
<div class="t" style="left:39.62px;top:1046.90px;font-size:13.0px;line-height:13.0px;color:#000;transform:scaleX(1.0105);">Pitch</div>
<div class="t" style="left:489.86px;top:1046.90px;font-size:13.0px;line-height:13.0px;color:#000;transform:scaleX(1.0568);">0.890398</div>
<div class="t" style="left:39.64px;top:1061.95px;font-size:13.0px;line-height:13.0px;color:#000;transform:scaleX(0.9952);">Focal Point</div>
<div class="t" style="left:489.79px;top:1061.95px;font-size:13.0px;line-height:13.0px;color:#000;transform:scaleX(1.0642);">-0.15437; 0.11848; 0.025382</div>
<svg style="position:absolute;left:25px;top:1064.3500000000001px" width="5" height="8"><path d="M0 0 V7 L4.3 3.5 Z" fill="#555"/></svg>
<div style="left:0px;top:1154px;width:320px;height:23px;background:linear-gradient(#fafafa,#e9e9e9);border:1px solid #b4b4b4;border-radius:3px;box-sizing:border-box"></div>
<div class="t" style="left:144.87px;top:1159.00px;font-size:13.0px;line-height:13.0px;color:#000;transform:scaleX(0.9951);">Save</div>
<div style="left:326px;top:1154px;width:323px;height:23px;background:linear-gradient(#fafafa,#e9e9e9);border:1px solid #b4b4b4;border-radius:3px;box-sizing:border-box"></div>
<div class="t" style="left:462.26px;top:1159.00px;font-size:13.0px;line-height:13.0px;color:#000;transform:scaleX(1.0068);">Remove</div>
<div style="left:655px;top:1154px;width:322px;height:23px;background:linear-gradient(#fafafa,#e9e9e9);border:1px solid #b4b4b4;border-radius:3px;box-sizing:border-box"></div>
<div class="t" style="left:790.51px;top:1159.00px;font-size:13.0px;line-height:13.0px;color:#000;transform:scaleX(1.0024);">Rename</div>
<svg style="position:absolute;left:482px;top:1181px" width="20" height="2"><rect x="0" y="0" width="1" height="1" fill="#a8a8a8"/><rect x="3" y="0" width="1" height="1" fill="#a8a8a8"/><rect x="6" y="0" width="1" height="1" fill="#a8a8a8"/><rect x="9" y="0" width="1" height="1" fill="#a8a8a8"/><rect x="12" y="0" width="1" height="1" fill="#a8a8a8"/><rect x="15" y="0" width="1" height="1" fill="#a8a8a8"/></svg>
<div style="left:0px;top:1185px;width:979px;height:22px;background:#b8b8b8"></div>
<div class="t" style="left:22.90px;top:1189.80px;font-size:13.0px;line-height:13.0px;color:#000;transform:scaleX(1.0336);">Time</div>
<svg style="position:absolute;left:0;top:1188px" width="16" height="16"><circle cx="8" cy="8" r="6.6" fill="#fff" stroke="#555" stroke-width="1.6"/><path d="M8 3.5 V8.5 H11.5" fill="none" stroke="#333" stroke-width="1.3"/></svg>
<svg style="position:absolute;left:959px;top:1187px" width="18" height="18" viewBox="0 0 18 18"><rect x="1" y="0.8" width="16" height="16" rx="2.5" fill="#fbfbfb" stroke="#9a9a9a" stroke-width="0.8"/><path d="M7 3.8 H11 L14 6.8 V10.8 L11 13.8 H7 L4 10.8 V6.8 Z" fill="#d0141a"/><path d="M7 6.8 L11 10.8 M11 6.8 L7 10.8" stroke="#fff" stroke-width="1.4"/></svg>
<div class="t" style="left:6.45px;top:1244.00px;font-size:13.0px;line-height:13.0px;color:#000;transform:scaleX(0.9855);">ROS Time:</div>
<div style="left:76.4px;top:1238.4px;width:124.0px;height:22.0px;background:#fff;border:1px solid #b4b4b4;border-radius:2px;box-sizing:border-box"></div>
<div class="t" style="left:78.75px;top:1242.60px;font-size:13.0px;line-height:13.0px;color:#000;transform:scaleX(1.0569);">1750872700.95</div>
<div class="t" style="left:206.36px;top:1244.00px;font-size:13.0px;line-height:13.0px;color:#000;transform:scaleX(0.9765);">ROS Elapsed:</div>
<div style="left:294.2px;top:1238.4px;width:124.19999999999999px;height:22.0px;background:#fff;border:1px solid #b4b4b4;border-radius:2px;box-sizing:border-box"></div>
<div class="t" style="left:296.91px;top:1242.60px;font-size:13.0px;line-height:13.0px;color:#000;transform:scaleX(1.0568);">273.81</div>
<div class="t" style="left:425.14px;top:1244.00px;font-size:13.0px;line-height:13.0px;color:#000;transform:scaleX(1.0356);">Wall Time:</div>
<div style="left:494.4px;top:1238.4px;width:124.30000000000007px;height:22.0px;background:#fff;border:1px solid #b4b4b4;border-radius:2px;box-sizing:border-box"></div>
<div class="t" style="left:496.75px;top:1242.60px;font-size:13.0px;line-height:13.0px;color:#000;transform:scaleX(1.0569);">1750872700.98</div>
<div class="t" style="left:625.64px;top:1244.00px;font-size:13.0px;line-height:13.0px;color:#000;transform:scaleX(1.0143);">Wall Elapsed:</div>
<div style="left:712.3px;top:1238.4px;width:124.60000000000002px;height:22.0px;background:#fff;border:1px solid #b4b4b4;border-radius:2px;box-sizing:border-box"></div>
<div class="t" style="left:715.01px;top:1242.60px;font-size:13.0px;line-height:13.0px;color:#000;transform:scaleX(1.0568);">273.81</div>
<div style="left:863px;top:1243.4px;width:14px;height:13.5px;background:#fff;border:1px solid #b2b2b2;box-sizing:border-box"></div>
<div class="t" style="left:881.07px;top:1244.00px;font-size:13.0px;line-height:13.0px;color:#000;transform:scaleX(1.0551);">Experimental</div>
<svg style="position:absolute;left:482px;top:1295px" width="20" height="2"><rect x="0" y="0" width="1" height="1" fill="#a8a8a8"/><rect x="3" y="0" width="1" height="1" fill="#a8a8a8"/><rect x="6" y="0" width="1" height="1" fill="#a8a8a8"/><rect x="9" y="0" width="1" height="1" fill="#a8a8a8"/><rect x="12" y="0" width="1" height="1" fill="#a8a8a8"/><rect x="15" y="0" width="1" height="1" fill="#a8a8a8"/></svg>
<div style="left:0px;top:1299px;width:979px;height:22px;background:#b8b8b8"></div>
<div class="t" style="left:22.90px;top:1303.80px;font-size:13.0px;line-height:13.0px;color:#000;transform:scaleX(1.0248);">Trajectory Preview</div>
<svg style="position:absolute;left:0;top:1302px" width="16" height="16"><path d="M8 1 L15 8 L8 15 L1 8 Z" fill="#7f9fd8" stroke="#3a5a9a" stroke-width="1"/><path d="M8 1 L15 8 L8 8 Z" fill="#b8c8ee"/></svg>
<svg style="position:absolute;left:959px;top:1301px" width="18" height="18" viewBox="0 0 18 18"><rect x="1" y="0.8" width="16" height="16" rx="2.5" fill="#fbfbfb" stroke="#9a9a9a" stroke-width="0.8"/><path d="M7 3.8 H11 L14 6.8 V10.8 L11 13.8 H7 L4 10.8 V6.8 Z" fill="#d0141a"/><path d="M7 6.8 L11 10.8 M11 6.8 L7 10.8" stroke="#fff" stroke-width="1.4"/></svg>
<div style="left:27px;top:1371px;width:933px;height:5px;background:linear-gradient(#cfcfcf,#e8e8e8);border:1px solid #b0b0b0;border-radius:2px;box-sizing:border-box"></div>
<div style="left:15px;top:1367px;width:13px;height:13px;background:linear-gradient(#fff,#eaeaea);border:1px solid #aaa;border-radius:3px;box-sizing:border-box"></div>
<div style="left:14px;top:1414px;width:80px;height:67.5px;background:linear-gradient(#fdfdfd,#ebebeb);border:1px solid #b4b4b4;border-radius:3px;box-sizing:border-box"></div>
<div class="t" style="left:40.63px;top:1442.00px;font-size:13.0px;line-height:13.0px;color:#000;transform:scaleX(0.9898);">Play</div>
<div class="t" style="left:353.12px;top:1442.00px;font-size:13.0px;line-height:13.0px;color:#000;transform:scaleX(1.0115);">Playback Speed</div>
<div style="left:455px;top:1437px;width:80.5px;height:21.2px;background:#fff;border:1px solid #b4b4b4;border-radius:2px;box-sizing:border-box"></div>
<div style="left:521px;top:1438px;width:1px;height:19px;background:#c8c8c8"></div>
<div class="t" style="left:459.65px;top:1441.80px;font-size:13.0px;line-height:13.0px;color:#000;transform:scaleX(1.0634);">1.00 x</div>
<svg style="position:absolute;left:523px;top:1440px" width="10" height="16"><path d="M1.5 6 L5 2 L8.5 6 Z M1.5 10 L5 14 L8.5 10 Z" fill="#555"/></svg>
<div class="t" style="left:803.90px;top:1441.80px;font-size:13.0px;line-height:13.0px;color:#000;transform:scaleX(1.0222);">Time Now</div>
<div style="left:877px;top:1414.5px;width:1px;height:67.5px;background:#9a9a9a"></div>
<div class="t" style="left:892.20px;top:1441.80px;font-size:13.0px;line-height:13.0px;color:#000;transform:scaleX(1.0331);">Total Time</div>
<svg style="position:absolute;left:482px;top:1502px" width="20" height="2"><rect x="0" y="0" width="1" height="1" fill="#a8a8a8"/><rect x="3" y="0" width="1" height="1" fill="#a8a8a8"/><rect x="6" y="0" width="1" height="1" fill="#a8a8a8"/><rect x="9" y="0" width="1" height="1" fill="#a8a8a8"/><rect x="12" y="0" width="1" height="1" fill="#a8a8a8"/><rect x="15" y="0" width="1" height="1" fill="#a8a8a8"/></svg>
<div style="left:0px;top:1506px;width:979px;height:22px;background:#b8b8b8"></div>
<div class="t" style="left:22.15px;top:1510.80px;font-size:13.0px;line-height:13.0px;color:#000;transform:scaleX(0.9886);">RvizArgsPanel</div>
<svg style="position:absolute;left:0;top:1509px" width="16" height="16"><path d="M8 1 L15 8 L8 15 L1 8 Z" fill="#7f9fd8" stroke="#3a5a9a" stroke-width="1"/><path d="M8 1 L15 8 L8 8 Z" fill="#b8c8ee"/></svg>
<svg style="position:absolute;left:959px;top:1508px" width="18" height="18" viewBox="0 0 18 18"><rect x="1" y="0.8" width="16" height="16" rx="2.5" fill="#fbfbfb" stroke="#9a9a9a" stroke-width="0.8"/><path d="M7 3.8 H11 L14 6.8 V10.8 L11 13.8 H7 L4 10.8 V6.8 Z" fill="#d0141a"/><path d="M7 6.8 L11 10.8 M11 6.8 L7 10.8" stroke="#fff" stroke-width="1.4"/></svg>
<div style="left:0px;top:1552px;width:47.5px;height:30px;background:linear-gradient(#fdfdfd,#efefef);border:1px solid #b4b4b4;border-radius:3px;box-sizing:border-box"></div>
<div class="t" style="left:5.35px;top:1556.60px;font-size:13.0px;line-height:13.0px;color:#000;transform:scaleX(0.9879);">Reset</div>
<svg style="position:absolute;left:981px;top:816px" width="16" height="18"><rect x="1" y="1" width="1" height="1" fill="#999"/><rect x="1" y="4" width="1" height="1" fill="#999"/><rect x="1" y="7" width="1" height="1" fill="#999"/><rect x="1" y="10" width="1" height="1" fill="#999"/><rect x="1" y="13" width="1" height="1" fill="#999"/><rect x="1" y="16" width="1" height="1" fill="#999"/><path d="M10 4 V11.8 L14 7.9 Z" transform="translate(24,0) scale(-1,1)" fill="#444"/></svg>
<svg style="position:absolute;left:2454px;top:816px" width="10" height="14"><path d="M6 4 V11.8 L10 7.9 Z" fill="#444"/></svg>
<div class="t" style="left:2432.08px;top:1552.90px;font-size:13.0px;line-height:13.0px;color:#000;transform:scaleX(1.0502);">31 fps</div>
<div style="left:1009px;top:107px;width:1437px;height:1434px;background:#fff"></div>
<svg style="position:absolute;left:0;top:0" width="2470" height="1571" viewBox="0 0 2470 1571"><defs><clipPath id="vpc"><rect x="1010" y="108" width="1435" height="1432"/></clipPath><linearGradient id="gBall" gradientUnits="userSpaceOnUse" x1="1595" y1="0" x2="1650" y2="0"><stop offset="0" stop-color="#c8c8c8"/><stop offset="0.3" stop-color="#eeeeee"/><stop offset="0.6" stop-color="#f8f8f8"/><stop offset="1" stop-color="#dcdcdc"/></linearGradient><linearGradient id="gEl" gradientUnits="userSpaceOnUse" x1="1622" y1="0" x2="1728" y2="0"><stop offset="0" stop-color="#bdbdbd"/><stop offset="0.25" stop-color="#e4e4e4"/><stop offset="0.55" stop-color="#f6f6f6"/><stop offset="0.85" stop-color="#e6e6e6"/><stop offset="1" stop-color="#c8c8c8"/></linearGradient><linearGradient id="gCol" gradientUnits="userSpaceOnUse" x1="1644" y1="0" x2="1700" y2="0"><stop offset="0" stop-color="#4a4a4a"/><stop offset="0.15" stop-color="#626262"/><stop offset="0.5" stop-color="#7a7a7a"/><stop offset="0.85" stop-color="#5c5c5c"/><stop offset="1" stop-color="#3e3e3e"/></linearGradient><linearGradient id="gS" gradientUnits="userSpaceOnUse" x1="0" y1="386" x2="0" y2="535"><stop offset="0" stop-color="#7c7c7c"/><stop offset="0.15" stop-color="#626262"/><stop offset="0.35" stop-color="#454545"/><stop offset="0.55" stop-color="#4a4a4a"/><stop offset="0.7" stop-color="#8e8e8e"/><stop offset="0.85" stop-color="#bdbdbd"/><stop offset="1" stop-color="#c4c4c4"/></linearGradient><linearGradient id="gSh" gradientUnits="userSpaceOnUse" x1="1595" y1="0" x2="1675" y2="0"><stop offset="0" stop-color="rgba(0,0,0,0.25)"/><stop offset="0.35" stop-color="rgba(0,0,0,0)"/><stop offset="0.7" stop-color="rgba(255,255,255,0.05)"/><stop offset="1" stop-color="rgba(0,0,0,0.3)"/></linearGradient><linearGradient id="gL2" gradientUnits="userSpaceOnUse" x1="1600" y1="560" x2="1720" y2="640"><stop offset="0" stop-color="#c8c8c8"/><stop offset="0.35" stop-color="#f0f0f0"/><stop offset="0.7" stop-color="#fdfdfd"/><stop offset="1" stop-color="#e0e0e0"/></linearGradient><linearGradient id="gL1" gradientUnits="userSpaceOnUse" x1="1578" y1="260" x2="1700" y2="330"><stop offset="0" stop-color="#bcbcbc"/><stop offset="0.25" stop-color="#d6d6d6"/><stop offset="0.55" stop-color="#f6f6f6"/><stop offset="0.8" stop-color="#eeeeee"/><stop offset="1" stop-color="#c8c8c8"/></linearGradient><linearGradient id="gFl" gradientUnits="userSpaceOnUse" x1="1577" y1="0" x2="1636" y2="0"><stop offset="0" stop-color="#5e5e5e"/><stop offset="0.45" stop-color="#8a8a8a"/><stop offset="1" stop-color="#6a6a6a"/></linearGradient><mask id="rm" maskUnits="userSpaceOnUse" x="1000" y="100" width="1460" height="1450"><rect x="1000" y="100" width="1460" height="1450" fill="#fff"/><g fill="#000"><polygon points="1600.0,812.0 1604.0,832.0 1611.0,845.0 1616.0,858.0 1625.0,862.0 1636.0,856.0 1632.0,835.0 1622.0,820.0"/><path d="M1608 724 Q1622 717 1640 720 L1649 724 L1649 800 Q1640 815 1625 828 Q1605 826 1598 808 Q1593 790 1595 760 Q1597 735 1608 724 Z"/><polygon points="1637.6,791.5 1622.5,813.5 1624.0,828.0 1632.0,841.0 1645.0,855.0 1656.8,868.0 1670.0,880.0 1684.0,890.0 1703.5,895.8 1716.0,892.0 1722.7,882.0 1728.0,866.0 1728.0,854.6 1722.0,838.0 1717.0,827.0 1713.0,799.7 1703.5,786.0"/><rect x="1644.5" y="668" width="55.7" height="149"/><polygon points="1637.0,386.1 1637.6,401.0 1628.3,414.7 1617.1,425.8 1608.4,439.5 1604.7,456.8 1602.2,475.4 1598.5,494.0 1596.7,512.6 1594.8,531.2 1595.4,545.0 1657.3,540.0 1656.8,531.2 1655.6,525.0 1651.9,506.4 1645.7,481.6 1641.9,463.0 1643.2,450.6 1654.3,435.7 1668.0,417.1 1674.2,398.5 1675.4,384.9"/><polygon points="1594.8,542.3 1599.1,563.9 1607.7,585.4 1620.6,617.7 1633.6,650.0 1646.5,669.4 1672.3,673.7 1698.2,671.6 1715.4,660.8 1721.9,639.3 1717.6,613.4 1704.7,585.4 1685.3,557.4 1668.0,538.0 1657.3,533.7"/><polygon points="1575.8,251.8 1575.1,280.5 1578.7,302.0 1584.4,316.4 1597.3,327.9 1610.3,335.1 1621.7,355.2 1637.5,371.0 1660.5,379.6 1684.9,379.6 1697.9,371.0 1702.9,352.3 1702.2,330.8 1693.6,309.2 1677.8,289.1 1657.7,269.0 1640.4,254.7 1636.1,246.1"/><rect x="1577" y="189" width="59" height="62"/></g></mask></defs><g clip-path="url(#vpc)"><rect x="1010" y="108" width="1435" height="1432" fill="#303030"/><rect x="1010.5" y="108.5" width="1434" height="1431" fill="none" stroke="#232323" stroke-width="1"/><polyline points="2135.7,-329.8 6577.8,1996.7" fill="none" stroke="#656565" stroke-width="1"/><polyline points="2135.7,-329.8 -712.3,260.5" fill="none" stroke="#656565" stroke-width="1"/><polyline points="1950.9,-291.4 6534.9,2475.7" fill="none" stroke="#656565" stroke-width="1"/><polyline points="2277.6,-255.5 -835.7,460.0" fill="none" stroke="#656565" stroke-width="1"/><polyline points="1751.1,-250.0 6477.5,3116.9" fill="none" stroke="#656565" stroke-width="1"/><polyline points="2442.6,-169.0 -995.0,717.5" fill="none" stroke="#656565" stroke-width="1"/><polyline points="1534.4,-205.1 6396.7,4019.4" fill="none" stroke="#656565" stroke-width="1"/><polyline points="2637.1,-67.2 -1208.4,1062.4" fill="none" stroke="#656565" stroke-width="1"/><polyline points="1298.5,-156.2 6274.6,5384.0" fill="none" stroke="#656565" stroke-width="1"/><polyline points="2869.6,54.6 -1509.2,1548.7" fill="none" stroke="#656565" stroke-width="1"/><polyline points="1040.8,-102.8 6068.4,7687.4" fill="none" stroke="#656565" stroke-width="1"/><polyline points="3152.5,202.7 -1965.1,2285.5" fill="none" stroke="#656565" stroke-width="1"/><polyline points="758.1,-44.2 5645.9,12406.7" fill="none" stroke="#656565" stroke-width="1"/><polyline points="3504.2,387.0 -2737.2,3533.5" fill="none" stroke="#656565" stroke-width="1"/><polyline points="446.7,20.3 4291.7,27533.7" fill="none" stroke="#656565" stroke-width="1"/><polyline points="3953.4,622.2 -4329.6,6107.4" fill="none" stroke="#656565" stroke-width="1"/><polyline points="101.8,91.8 -15425.0,137428.0" fill="none" stroke="#656565" stroke-width="1"/><polyline points="4547.0,933.1 -9530.8,14514.5" fill="none" stroke="#656565" stroke-width="1"/><polyline points="-282.1,171.4 -54633.9,148727.8" fill="none" stroke="#656565" stroke-width="1"/><polyline points="5367.9,1363.0 -74538.2,143283.2" fill="none" stroke="#656565" stroke-width="1"/><polyline points="-712.3,260.5 -77889.2,125006.1" fill="none" stroke="#656565" stroke-width="1"/><polyline points="6577.8,1996.7 -5609.2,138134.5" fill="none" stroke="#656565" stroke-width="1"/><text x="1636.5" y="165.2" text-anchor="middle" font-family="Liberation Sans" font-size="62.6" fill="#f0f0f0" stroke="#d8d8d8" stroke-width="0.5" xml:space="preserve">Simple  6-DOF  Control</text><path d="M1616 386 L1618.5 425 L1632 640 L1640 715" stroke="#a09a48" stroke-width="2.2" fill="none"/><polygon points="1600.0,812.0 1604.0,832.0 1611.0,845.0 1616.0,858.0 1625.0,862.0 1636.0,856.0 1632.0,835.0 1622.0,820.0" fill="#5c5c5c"/><path d="M1600 812 Q1612 830 1632 834 L1631 828 Q1612 824 1602 806 Z" fill="#777"/><path d="M1608 724 Q1622 717 1640 720 L1649 724 L1649 800 Q1640 815 1625 828 Q1605 826 1598 808 Q1593 790 1595 760 Q1597 735 1608 724 Z" fill="url(#gBall)"/><ellipse cx="1625" cy="737" rx="21" ry="16" fill="#eaeaea" stroke="#999" stroke-width="0.7"/><ellipse cx="1628" cy="737" rx="12" ry="9" fill="#dedede"/><path d="M1596 768 Q1620 778 1649 770 L1649 775 Q1620 784 1596 773 Z" fill="#c4c4c4"/><path d="M1599 806 Q1615 822 1636 822" stroke="#888" stroke-width="2.5" fill="none"/><polygon points="1637.6,791.5 1622.5,813.5 1624.0,828.0 1632.0,841.0 1645.0,855.0 1656.8,868.0 1670.0,880.0 1684.0,890.0 1703.5,895.8 1716.0,892.0 1722.7,882.0 1728.0,866.0 1728.0,854.6 1722.0,838.0 1717.0,827.0 1713.0,799.7 1703.5,786.0" fill="url(#gEl)"/><path d="M1632 826 Q1660 845 1690 848 Q1715 848 1725 842" stroke="#aaa" stroke-width="1.6" fill="none"/><path d="M1655 848 Q1680 872 1700 870 Q1712 868 1722 848" stroke="#999" stroke-width="0.8" fill="none"/><ellipse cx="1703" cy="879" rx="22.5" ry="16.5" fill="#dadada" stroke="#8a8a8a" stroke-width="0.8"/><ellipse cx="1706" cy="881" rx="15" ry="10.5" fill="#c8c8c8"/><ellipse cx="1675" cy="807" rx="39" ry="23" fill="#eeeeee" stroke="#9a9a9a" stroke-width="1"/><ellipse cx="1673" cy="806" rx="31" ry="15" fill="#d6d6d6"/><rect x="1644.5" y="668" width="55.7" height="136" fill="url(#gCol)"/><ellipse cx="1672.3" cy="804" rx="27.85" ry="10" fill="url(#gCol)"/><text x="0" y="0" transform="translate(1682,684) rotate(90)" font-family="Liberation Sans" font-weight="bold" font-size="10.5" fill="#bcbcbc" letter-spacing="0.5">DOOSAN</text><polygon points="1637.0,386.1 1637.6,401.0 1628.3,414.7 1617.1,425.8 1608.4,439.5 1604.7,456.8 1602.2,475.4 1598.5,494.0 1596.7,512.6 1594.8,531.2 1595.4,545.0 1657.3,540.0 1656.8,531.2 1655.6,525.0 1651.9,506.4 1645.7,481.6 1641.9,463.0 1643.2,450.6 1654.3,435.7 1668.0,417.1 1674.2,398.5 1675.4,384.9" fill="url(#gS)"/><polygon points="1637.0,386.1 1637.6,401.0 1628.3,414.7 1617.1,425.8 1608.4,439.5 1604.7,456.8 1602.2,475.4 1598.5,494.0 1596.7,512.6 1594.8,531.2 1595.4,545.0 1657.3,540.0 1656.8,531.2 1655.6,525.0 1651.9,506.4 1645.7,481.6 1641.9,463.0 1643.2,450.6 1654.3,435.7 1668.0,417.1 1674.2,398.5 1675.4,384.9" fill="url(#gSh)"/><path d="M1595 520 Q1625 528 1656 521 L1657 536 Q1625 543 1595 536 Z" fill="#a9a9a9"/><path d="M1597 523 Q1625 531 1655 524" stroke="#d8d8d8" stroke-width="0.6" fill="none" stroke-dasharray="2,2"/><polygon points="1594.8,542.3 1599.1,563.9 1607.7,585.4 1620.6,617.7 1633.6,650.0 1646.5,669.4 1672.3,673.7 1698.2,671.6 1715.4,660.8 1721.9,639.3 1717.6,613.4 1704.7,585.4 1685.3,557.4 1668.0,538.0 1657.3,533.7" fill="url(#gL2)"/><path d="M1598 540 Q1625 548 1657 534" stroke="#bcbcbc" stroke-width="3" fill="none"/><path d="M1608 585 Q1650 560 1688 560" stroke="#d0d0d0" stroke-width="2" fill="none"/><ellipse cx="1698" cy="650" rx="18.5" ry="17" fill="#d9d9d9" stroke="#aaa" stroke-width="0.8"/><ellipse cx="1700" cy="651" rx="12" ry="11" fill="#cdcdcd"/><path d="M1680 600 Q1690 620 1682 640" stroke="#999" stroke-width="0.8" fill="none"/><polygon points="1575.8,251.8 1575.1,280.5 1578.7,302.0 1584.4,316.4 1597.3,327.9 1610.3,335.1 1621.7,355.2 1637.5,371.0 1660.5,379.6 1684.9,379.6 1697.9,371.0 1702.9,352.3 1702.2,330.8 1693.6,309.2 1677.8,289.1 1657.7,269.0 1640.4,254.7 1636.1,246.1" fill="url(#gL1)"/><path d="M1576 262 Q1600 250 1640 256 L1657 269 Q1620 262 1582 270 Z" fill="#e8e8e8"/><path d="M1581 305 Q1590 322 1610 335 Q1600 318 1603 312 Z" fill="#555"/><path d="M1610 335 Q1630 365 1660 378 Q1640 377 1625 366 Z" fill="#9a9a9a"/><path d="M1603 270 Q1625 268 1650 282" stroke="#bbb" stroke-width="0.8" fill="none"/><path d="M1657 301 Q1668 300 1685 330 Q1692 345 1690 352" stroke="#999" stroke-width="0.8" fill="none"/><ellipse cx="1683.5" cy="360.2" rx="16.2" ry="18" fill="#d4d4d4" stroke="#888" stroke-width="0.7"/><ellipse cx="1685" cy="361" rx="11" ry="12.5" fill="#c8c8c8"/><rect x="1577" y="204.4" width="59" height="44" fill="url(#gFl)"/><rect x="1577" y="233" width="59" height="1.5" fill="#555"/><rect x="1577" y="243" width="59" height="2" fill="#4a4a4a"/><ellipse cx="1606.5" cy="248" rx="29.5" ry="6" fill="#9a9a9a"/><ellipse cx="1606.7" cy="204.4" rx="29.4" ry="15.8" fill="#8c8c8c" stroke="#6a6a6a" stroke-width="0.8"/><ellipse cx="1610" cy="200" rx="14" ry="8" fill="#999" stroke="#6a6a6a" stroke-width="0.8"/><polygon points="1634.8,961.5 1654.6,959.9 1673.4,964.7 1688.6,975.2 1697.7,989.9 1699.5,1006.8 1693.4,1023.2 1680.2,1036.6 1661.9,1044.9 1641.4,1046.6 1622.0,1041.5 1606.7,1030.4 1597.9,1015.2 1596.9,998.2 1603.6,982.1 1617.0,969.3" fill="rgb(0,0,140)" fill-opacity="0.5" mask="url(#rm)"/><polygon points="1677.0,958.0 1673.1,967.9 1675.2,1014.9 1678.9,1005.1" fill="rgb(0,0,141)" fill-opacity="0.5" mask="url(#rm)"/><polygon points="1619.3,972.3 1613.8,963.1 1618.1,1010.1 1623.4,1019.2" fill="rgb(0,0,143)" fill-opacity="0.5" mask="url(#rm)"/><polygon points="1673.1,967.9 1664.9,976.1 1667.3,1022.9 1675.2,1014.9" fill="rgb(0,0,167)" fill-opacity="0.5" mask="url(#rm)"/><polygon points="1628.8,979.0 1619.3,972.3 1623.4,1019.2 1632.5,1025.7" fill="rgb(0,0,169)" fill-opacity="0.5" mask="url(#rm)"/><polygon points="1664.9,976.1 1653.6,981.1 1656.3,1027.8 1667.3,1022.9" fill="rgb(0,0,185)" fill-opacity="0.5" mask="url(#rm)"/><polygon points="1640.9,982.1 1628.8,979.0 1632.5,1025.7 1644.1,1028.8" fill="rgb(0,0,186)" fill-opacity="0.5" mask="url(#rm)"/><polygon points="1653.6,981.1 1640.9,982.1 1644.1,1028.8 1656.3,1027.8" fill="rgb(0,0,191)" fill-opacity="0.5" mask="url(#rm)"/><polygon points="1636.7,930.2 1649.1,929.2 1660.9,932.1 1670.4,938.6 1676.1,947.7 1677.0,958.0 1673.1,967.9 1664.9,976.1 1653.6,981.1 1640.9,982.1 1628.8,979.0 1619.3,972.3 1613.8,963.1 1613.1,952.7 1617.3,942.9 1625.5,935.0" fill="rgb(0,0,140)" fill-opacity="0.5" mask="url(#rm)"/><polygon points="1453.2,624.0 1458.4,607.1 1470.1,562.4" fill="rgb(0,116,0)" fill-opacity="0.5" mask="url(#rm)"/><polygon points="1507.9,571.6 1526.8,571.3 1470.1,562.4" fill="rgb(0,126,0)" fill-opacity="0.5" mask="url(#rm)"/><polygon points="1552.3,604.4 1546.6,620.8 1534.6,636.0 1518.0,647.9 1499.2,654.7 1480.8,655.6 1465.6,650.2 1455.8,639.1 1453.2,624.0 1458.4,607.1 1470.7,591.0 1488.1,578.5 1507.9,571.6 1526.8,571.3 1541.8,577.5 1550.7,589.2" fill="rgb(0,140,0)" fill-opacity="0.5" mask="url(#rm)"/><polygon points="1458.4,607.1 1470.7,591.0 1470.1,562.4" fill="rgb(0,137,0)" fill-opacity="0.5" mask="url(#rm)"/><polygon points="1488.1,578.5 1507.9,571.6 1470.1,562.4" fill="rgb(0,142,0)" fill-opacity="0.5" mask="url(#rm)"/><polygon points="1470.7,591.0 1488.1,578.5 1470.1,562.4" fill="rgb(0,146,0)" fill-opacity="0.5" mask="url(#rm)"/><polygon points="1562.4,646.4 1567.8,653.2 1531.8,599.1 1526.4,592.2" fill="rgb(0,120,0)" fill-opacity="0.5" mask="url(#rm)"/><polygon points="1509.5,684.3 1508.2,675.3 1473.5,620.0 1474.9,629.1" fill="rgb(0,144,0)" fill-opacity="0.5" mask="url(#rm)"/><polygon points="1553.3,643.0 1562.4,646.4 1526.4,592.2 1517.3,588.6" fill="rgb(0,160,0)" fill-opacity="0.5" mask="url(#rm)"/><polygon points="1508.2,675.3 1511.6,665.1 1476.6,609.9 1473.5,620.0" fill="rgb(0,180,0)" fill-opacity="0.5" mask="url(#rm)"/><polygon points="1541.9,643.5 1553.3,643.0 1517.3,588.6 1506.1,588.8" fill="rgb(0,192,0)" fill-opacity="0.5" mask="url(#rm)"/><polygon points="1511.6,665.1 1519.2,655.5 1484.0,600.4 1476.6,609.9" fill="rgb(0,205,0)" fill-opacity="0.5" mask="url(#rm)"/><polygon points="1529.9,647.9 1541.9,643.5 1506.1,588.8 1494.3,593.0" fill="rgb(0,212,0)" fill-opacity="0.5" mask="url(#rm)"/><polygon points="1519.2,655.5 1529.9,647.9 1494.3,593.0 1484.0,600.4" fill="rgb(0,217,0)" fill-opacity="0.5" mask="url(#rm)"/><polygon points="1568.7,662.2 1565.1,672.2 1557.6,681.5 1547.2,688.9 1535.6,693.3 1524.3,694.0 1515.2,690.8 1509.5,684.3 1508.2,675.3 1511.6,665.1 1519.2,655.5 1529.9,647.9 1541.9,643.5 1553.3,643.0 1562.4,646.4 1567.8,653.2" fill="rgb(0,140,0)" fill-opacity="0.5" mask="url(#rm)"/><polygon points="1947.7,748.5 1941.1,756.4 1931.3,756.4 1919.9,748.6 1908.6,734.5 1898.8,716.1 1892.1,696.1 1889.2,677.2 1890.8,662.2 1896.7,653.3 1906.1,652.1 1917.8,659.1 1929.8,673.4 1940.2,692.7 1947.3,714.0 1949.9,733.7" fill="rgb(140,0,0)" fill-opacity="0.5" mask="url(#rm)"/><polygon points="1906.1,652.1 1917.8,659.1 1994.1,674.2" fill="rgb(135,0,0)" fill-opacity="0.5" mask="url(#rm)"/><polygon points="1949.9,733.7 1947.7,748.5 1994.1,674.2" fill="rgb(145,0,0)" fill-opacity="0.5" mask="url(#rm)"/><polygon points="1917.8,659.1 1929.8,673.4 1994.1,674.2" fill="rgb(167,0,0)" fill-opacity="0.5" mask="url(#rm)"/><polygon points="1947.3,714.0 1949.9,733.7 1994.1,674.2" fill="rgb(174,0,0)" fill-opacity="0.5" mask="url(#rm)"/><polygon points="1929.8,673.4 1940.2,692.7 1994.1,674.2" fill="rgb(186,0,0)" fill-opacity="0.5" mask="url(#rm)"/><polygon points="1940.2,692.7 1947.3,714.0 1994.1,674.2" fill="rgb(188,0,0)" fill-opacity="0.5" mask="url(#rm)"/><polygon points="1827.8,704.9 1833.0,704.6 1911.3,673.3 1905.6,673.9" fill="rgb(130,0,0)" fill-opacity="0.5" mask="url(#rm)"/><polygon points="1858.1,763.2 1854.8,767.9 1932.2,735.8 1936.1,730.9" fill="rgb(144,0,0)" fill-opacity="0.5" mask="url(#rm)"/><polygon points="1833.0,704.6 1839.6,709.2 1918.2,677.6 1911.3,673.3" fill="rgb(178,0,0)" fill-opacity="0.5" mask="url(#rm)"/><polygon points="1858.1,763.2 1854.8,767.9 1849.4,767.7 1842.9,762.9 1836.3,754.1 1830.4,742.8 1826.1,730.5 1824.1,719.0 1824.7,710.0 1827.8,704.9 1833.0,704.6 1839.6,709.2 1846.5,718.0 1852.6,729.7 1857.0,742.5 1858.9,754.3" fill="rgb(140,0,0)" fill-opacity="0.5" mask="url(#rm)"/><polygon points="1858.9,754.3 1858.1,763.2 1936.1,730.9 1937.3,722.0" fill="rgb(190,0,0)" fill-opacity="0.5" mask="url(#rm)"/><polygon points="1839.6,709.2 1846.5,718.0 1925.3,686.2 1918.2,677.6" fill="rgb(217,0,0)" fill-opacity="0.5" mask="url(#rm)"/><polygon points="1857.0,742.5 1858.9,754.3 1937.3,722.0 1935.7,710.3" fill="rgb(225,0,0)" fill-opacity="0.5" mask="url(#rm)"/><polygon points="1846.5,718.0 1852.6,729.7 1931.5,697.7 1925.3,686.2" fill="rgb(239,0,0)" fill-opacity="0.5" mask="url(#rm)"/><polygon points="1852.6,729.7 1857.0,742.5 1935.7,710.3 1931.5,697.7" fill="rgb(242,0,0)" fill-opacity="0.5" mask="url(#rm)"/><g opacity="0.5"><polygon points="1343.3,939.1 1341.6,927.4 1412.7,873.0 1411.2,883.0" fill="rgb(0,153,0)" stroke="rgb(0,153,0)" stroke-width="1" mask="url(#rm)"/><polygon points="1341.6,927.4 1339.8,915.6 1414.3,862.9 1412.7,873.0" fill="rgb(0,153,0)" stroke="rgb(0,153,0)" stroke-width="1" mask="url(#rm)"/><polygon points="1339.8,915.6 1338.1,903.6 1415.9,852.6 1414.3,862.9" fill="rgb(0,153,0)" stroke="rgb(0,153,0)" stroke-width="1" mask="url(#rm)"/><polygon points="1338.1,903.6 1339.6,890.4 1419.9,841.9 1415.9,852.6" fill="rgb(0,255,0)" stroke="rgb(0,255,0)" stroke-width="1"/><polygon points="1339.6,890.4 1341.1,877.1 1424.0,831.0 1419.9,841.9" fill="rgb(0,255,0)" stroke="rgb(0,255,0)" stroke-width="1"/><polygon points="1341.1,877.1 1342.6,863.5 1428.1,820.1 1424.0,831.0" fill="rgb(0,255,0)" stroke="rgb(0,255,0)" stroke-width="1"/><polygon points="1342.6,863.5 1347.5,849.2 1434.5,809.0 1428.1,820.1" fill="rgb(0,153,0)" stroke="rgb(0,153,0)" stroke-width="1"/><polygon points="1347.5,849.2 1352.5,834.8 1441.1,797.9 1434.5,809.0" fill="rgb(0,153,0)" stroke="rgb(0,153,0)" stroke-width="1"/><polygon points="1352.5,834.8 1357.5,820.2 1447.6,786.6 1441.1,797.9" fill="rgb(0,153,0)" stroke="rgb(0,153,0)" stroke-width="1" mask="url(#rm)"/><polygon points="1357.5,820.2 1365.8,805.3 1456.4,775.7 1447.6,786.6" fill="rgb(0,255,0)" stroke="rgb(0,255,0)" stroke-width="1" mask="url(#rm)"/><polygon points="1365.8,805.3 1374.2,790.4 1465.2,764.7 1456.4,775.7" fill="rgb(0,255,0)" stroke="rgb(0,255,0)" stroke-width="1" mask="url(#rm)"/><polygon points="1374.2,790.4 1382.6,775.2 1474.1,753.6 1465.2,764.7" fill="rgb(0,255,0)" stroke="rgb(0,255,0)" stroke-width="1" mask="url(#rm)"/><polygon points="1382.6,775.2 1394.1,760.4 1484.8,743.2 1474.1,753.6" fill="rgb(0,153,0)" stroke="rgb(0,153,0)" stroke-width="1" mask="url(#rm)"/><polygon points="1394.1,760.4 1405.8,745.5 1495.6,732.8 1484.8,743.2" fill="rgb(0,153,0)" stroke="rgb(0,153,0)" stroke-width="1" mask="url(#rm)"/><polygon points="1405.8,745.5 1417.5,730.5 1506.4,722.4 1495.6,732.8" fill="rgb(0,153,0)" stroke="rgb(0,153,0)" stroke-width="1" mask="url(#rm)"/><polygon points="1417.5,730.5 1431.8,716.4 1518.8,713.0 1506.4,722.4" fill="rgb(0,255,0)" stroke="rgb(0,255,0)" stroke-width="1" mask="url(#rm)"/><polygon points="1431.8,716.4 1446.3,702.3 1531.1,703.6 1518.8,713.0" fill="rgb(0,255,0)" stroke="rgb(0,255,0)" stroke-width="1" mask="url(#rm)"/><polygon points="1446.3,702.3 1460.8,688.1 1543.5,694.2 1531.1,703.6" fill="rgb(0,255,0)" stroke="rgb(0,255,0)" stroke-width="1" mask="url(#rm)"/><polygon points="1460.8,688.1 1477.4,675.4 1556.9,686.3 1543.5,694.2" fill="rgb(0,153,0)" stroke="rgb(0,153,0)" stroke-width="1" mask="url(#rm)"/><polygon points="1477.4,675.4 1494.1,662.7 1570.3,678.4 1556.9,686.3" fill="rgb(0,153,0)" stroke="rgb(0,153,0)" stroke-width="1" mask="url(#rm)"/><polygon points="1494.1,662.7 1510.8,650.0 1583.7,670.4 1570.3,678.4" fill="rgb(0,153,0)" stroke="rgb(0,153,0)" stroke-width="1" mask="url(#rm)"/><polygon points="1510.8,650.0 1529.0,639.3 1597.6,664.2 1583.7,670.4" fill="rgb(0,255,0)" stroke="rgb(0,255,0)" stroke-width="1" mask="url(#rm)"/><polygon points="1529.0,639.3 1547.1,628.6 1611.5,658.1 1597.6,664.2" fill="rgb(0,255,0)" stroke="rgb(0,255,0)" stroke-width="1" mask="url(#rm)"/><polygon points="1547.1,628.6 1565.2,617.9 1625.3,651.9 1611.5,658.1" fill="rgb(0,255,0)" stroke="rgb(0,255,0)" stroke-width="1" mask="url(#rm)"/><polygon points="1565.2,617.9 1584.1,609.7 1639.2,647.7 1625.3,651.9" fill="rgb(0,153,0)" stroke="rgb(0,153,0)" stroke-width="1" mask="url(#rm)"/><polygon points="1584.1,609.7 1602.8,601.5 1653.0,643.5 1639.2,647.7" fill="rgb(0,153,0)" stroke="rgb(0,153,0)" stroke-width="1" mask="url(#rm)"/><polygon points="1602.8,601.5 1621.5,593.4 1666.7,639.3 1653.0,643.5" fill="rgb(0,153,0)" stroke="rgb(0,153,0)" stroke-width="1" mask="url(#rm)"/><polygon points="1621.5,593.4 1640.2,588.0 1679.9,637.2 1666.7,639.3" fill="rgb(0,255,0)" stroke="rgb(0,255,0)" stroke-width="1" mask="url(#rm)"/><polygon points="1640.2,588.0 1658.8,582.6 1693.1,635.1 1679.9,637.2" fill="rgb(0,255,0)" stroke="rgb(0,255,0)" stroke-width="1" mask="url(#rm)"/><polygon points="1658.8,582.6 1677.1,577.3 1706.1,633.0 1693.1,635.1" fill="rgb(0,255,0)" stroke="rgb(0,255,0)" stroke-width="1" mask="url(#rm)"/><polygon points="1677.1,577.3 1694.9,574.8 1718.2,633.0 1706.1,633.0" fill="rgb(0,153,0)" stroke="rgb(0,153,0)" stroke-width="1" mask="url(#rm)"/><polygon points="1694.9,574.8 1712.4,572.3 1730.2,633.0 1718.2,633.0" fill="rgb(0,153,0)" stroke="rgb(0,153,0)" stroke-width="1" mask="url(#rm)"/><polygon points="1712.4,572.3 1729.7,569.9 1742.1,633.0 1730.2,633.0" fill="rgb(0,153,0)" stroke="rgb(0,153,0)" stroke-width="1" mask="url(#rm)"/><polygon points="1729.7,569.9 1745.8,570.3 1752.7,635.1 1742.1,633.0" fill="rgb(0,255,0)" stroke="rgb(0,255,0)" stroke-width="1" mask="url(#rm)"/><polygon points="1745.8,570.3 1761.6,570.8 1763.2,637.1 1752.7,635.1" fill="rgb(0,255,0)" stroke="rgb(0,255,0)" stroke-width="1" mask="url(#rm)"/><polygon points="1761.6,570.8 1777.2,571.2 1773.6,639.0 1763.2,637.1" fill="rgb(0,255,0)" stroke="rgb(0,255,0)" stroke-width="1" mask="url(#rm)"/><polygon points="1777.2,571.2 1791.0,574.4 1782.4,642.9 1773.6,639.0" fill="rgb(0,153,0)" stroke="rgb(0,153,0)" stroke-width="1" mask="url(#rm)"/><polygon points="1791.0,574.4 1804.6,577.5 1791.0,646.8 1782.4,642.9" fill="rgb(0,153,0)" stroke="rgb(0,153,0)" stroke-width="1" mask="url(#rm)"/><polygon points="1804.6,577.5 1818.0,580.6 1799.6,650.6 1791.0,646.8" fill="rgb(0,153,0)" stroke="rgb(0,153,0)" stroke-width="1" mask="url(#rm)"/><polygon points="1818.0,580.6 1829.2,586.2 1806.3,656.1 1799.6,650.6" fill="rgb(0,255,0)" stroke="rgb(0,255,0)" stroke-width="1" mask="url(#rm)"/><polygon points="1829.2,586.2 1840.2,591.7 1812.9,661.5 1806.3,656.1" fill="rgb(0,255,0)" stroke="rgb(0,255,0)" stroke-width="1" mask="url(#rm)"/><polygon points="1840.2,591.7 1851.1,597.2 1819.5,666.9 1812.9,661.5" fill="rgb(0,255,0)" stroke="rgb(0,255,0)" stroke-width="1" mask="url(#rm)"/><polygon points="1851.1,597.2 1859.5,604.9 1824.1,673.7 1819.5,666.9" fill="rgb(0,153,0)" stroke="rgb(0,153,0)" stroke-width="1" mask="url(#rm)"/><polygon points="1859.5,604.9 1867.7,612.4 1828.6,680.5 1824.1,673.7" fill="rgb(0,153,0)" stroke="rgb(0,153,0)" stroke-width="1" mask="url(#rm)"/><polygon points="1867.7,612.4 1875.8,619.8 1833.1,687.2 1828.6,680.5" fill="rgb(0,153,0)" stroke="rgb(0,153,0)" stroke-width="1" mask="url(#rm)"/><polygon points="1875.8,619.8 1881.3,629.2 1835.5,695.1 1833.1,687.2" fill="rgb(0,255,0)" stroke="rgb(0,255,0)" stroke-width="1" mask="url(#rm)"/><polygon points="1881.3,629.2 1886.7,638.4 1837.9,702.9 1835.5,695.1" fill="rgb(0,255,0)" stroke="rgb(0,255,0)" stroke-width="1" mask="url(#rm)"/><polygon points="1886.7,638.4 1892.0,647.4 1840.3,710.6 1837.9,702.9" fill="rgb(0,255,0)" stroke="rgb(0,255,0)" stroke-width="1" mask="url(#rm)"/><polygon points="1892.0,647.4 1894.7,658.1 1840.6,719.3 1840.3,710.6" fill="rgb(0,153,0)" stroke="rgb(0,153,0)" stroke-width="1" mask="url(#rm)"/><polygon points="1894.7,658.1 1897.3,668.5 1841.0,727.9 1840.6,719.3" fill="rgb(0,153,0)" stroke="rgb(0,153,0)" stroke-width="1" mask="url(#rm)"/><polygon points="1897.3,668.5 1899.9,678.7 1841.3,736.4 1841.0,727.9" fill="rgb(0,153,0)" stroke="rgb(0,153,0)" stroke-width="1" mask="url(#rm)"/><polygon points="1899.9,678.7 1899.8,690.2 1839.6,745.6 1841.3,736.4" fill="rgb(0,255,0)" stroke="rgb(0,255,0)" stroke-width="1" mask="url(#rm)"/><polygon points="1899.8,690.2 1899.8,701.5 1838.0,754.7 1839.6,745.6" fill="rgb(0,255,0)" stroke="rgb(0,255,0)" stroke-width="1" mask="url(#rm)"/><polygon points="1899.8,701.5 1899.7,712.6 1836.3,763.6 1838.0,754.7" fill="rgb(0,255,0)" stroke="rgb(0,255,0)" stroke-width="1" mask="url(#rm)"/><polygon points="1899.7,712.6 1897.1,724.6 1832.8,773.1 1836.3,763.6" fill="rgb(0,153,0)" stroke="rgb(0,153,0)" stroke-width="1" mask="url(#rm)"/><polygon points="1897.1,724.6 1894.6,736.4 1829.4,782.4 1832.8,773.1" fill="rgb(0,153,0)" stroke="rgb(0,153,0)" stroke-width="1" mask="url(#rm)"/><polygon points="1894.6,736.4 1892.1,748.0 1825.9,791.6 1829.4,782.4" fill="rgb(0,153,0)" stroke="rgb(0,153,0)" stroke-width="1" mask="url(#rm)"/><polygon points="1892.1,748.0 1887.3,760.1 1820.7,801.0 1825.9,791.6" fill="rgb(0,255,0)" stroke="rgb(0,255,0)" stroke-width="1" mask="url(#rm)"/><polygon points="1887.3,760.1 1882.5,772.1 1815.6,810.4 1820.7,801.0" fill="rgb(0,255,0)" stroke="rgb(0,255,0)" stroke-width="1" mask="url(#rm)"/><polygon points="1882.5,772.1 1877.8,783.9 1810.5,819.6 1815.6,810.4" fill="rgb(0,255,0)" stroke="rgb(0,255,0)" stroke-width="1" mask="url(#rm)"/><polygon points="1877.8,783.9 1870.9,795.9 1803.8,828.8 1810.5,819.6" fill="rgb(0,153,0)" stroke="rgb(0,153,0)" stroke-width="1" mask="url(#rm)"/><polygon points="1870.9,795.9 1864.1,807.8 1797.2,837.9 1803.8,828.8" fill="rgb(0,153,0)" stroke="rgb(0,153,0)" stroke-width="1" mask="url(#rm)"/><polygon points="1864.1,807.8 1857.3,819.6 1790.6,847.0 1797.2,837.9" fill="rgb(0,153,0)" stroke="rgb(0,153,0)" stroke-width="1" mask="url(#rm)"/><polygon points="1857.3,819.6 1848.7,831.2 1782.6,855.8 1790.6,847.0" fill="rgb(0,255,0)" stroke="rgb(0,255,0)" stroke-width="1" mask="url(#rm)"/><polygon points="1848.7,831.2 1840.1,842.8 1774.7,864.5 1782.6,855.8" fill="rgb(0,255,0)" stroke="rgb(0,255,0)" stroke-width="1" mask="url(#rm)"/><polygon points="1840.1,842.8 1831.5,854.2 1766.8,873.1 1774.7,864.5" fill="rgb(0,255,0)" stroke="rgb(0,255,0)" stroke-width="1" mask="url(#rm)"/><polygon points="1831.5,854.2 1821.3,865.3 1757.7,881.3 1766.8,873.1" fill="rgb(0,153,0)" stroke="rgb(0,153,0)" stroke-width="1" mask="url(#rm)"/><polygon points="1821.3,865.3 1811.2,876.2 1748.7,889.4 1757.7,881.3" fill="rgb(0,153,0)" stroke="rgb(0,153,0)" stroke-width="1" mask="url(#rm)"/><polygon points="1811.2,876.2 1801.1,887.2 1739.7,897.5 1748.7,889.4" fill="rgb(0,153,0)" stroke="rgb(0,153,0)" stroke-width="1" mask="url(#rm)"/><polygon points="1801.1,887.2 1789.6,897.4 1729.8,904.9 1739.7,897.5" fill="rgb(0,255,0)" stroke="rgb(0,255,0)" stroke-width="1" mask="url(#rm)"/><polygon points="1789.6,897.4 1778.2,907.7 1719.9,912.3 1729.8,904.9" fill="rgb(0,255,0)" stroke="rgb(0,255,0)" stroke-width="1" mask="url(#rm)"/><polygon points="1778.2,907.7 1766.8,917.8 1710.0,919.6 1719.9,912.3" fill="rgb(0,255,0)" stroke="rgb(0,255,0)" stroke-width="1" mask="url(#rm)"/><polygon points="1766.8,917.8 1754.2,927.1 1699.4,926.1 1710.0,919.6" fill="rgb(0,153,0)" stroke="rgb(0,153,0)" stroke-width="1" mask="url(#rm)"/><polygon points="1754.2,927.1 1741.7,936.4 1688.8,932.6 1699.4,926.1" fill="rgb(0,153,0)" stroke="rgb(0,153,0)" stroke-width="1" mask="url(#rm)"/><polygon points="1741.7,936.4 1729.2,945.7 1678.2,939.1 1688.8,932.6" fill="rgb(0,153,0)" stroke="rgb(0,153,0)" stroke-width="1" mask="url(#rm)"/><polygon points="1729.2,945.7 1715.9,953.9 1667.2,944.5 1678.2,939.1" fill="rgb(0,255,0)" stroke="rgb(0,255,0)" stroke-width="1" mask="url(#rm)"/><polygon points="1715.9,953.9 1702.5,962.1 1656.1,949.9 1667.2,944.5" fill="rgb(0,255,0)" stroke="rgb(0,255,0)" stroke-width="1" mask="url(#rm)"/><polygon points="1702.5,962.1 1689.2,970.3 1645.0,955.3 1656.1,949.9" fill="rgb(0,255,0)" stroke="rgb(0,255,0)" stroke-width="1" mask="url(#rm)"/><polygon points="1689.2,970.3 1675.3,977.2 1633.8,959.6 1645.0,955.3" fill="rgb(0,153,0)" stroke="rgb(0,153,0)" stroke-width="1" mask="url(#rm)"/><polygon points="1675.3,977.2 1661.4,984.1 1622.6,963.8 1633.8,959.6" fill="rgb(0,153,0)" stroke="rgb(0,153,0)" stroke-width="1" mask="url(#rm)"/><polygon points="1661.4,984.1 1647.4,991.0 1611.2,968.1 1622.6,963.8" fill="rgb(0,153,0)" stroke="rgb(0,153,0)" stroke-width="1" mask="url(#rm)"/><polygon points="1647.4,991.0 1633.2,996.5 1600.1,971.0 1611.2,968.1" fill="rgb(0,255,0)" stroke="rgb(0,255,0)" stroke-width="1" mask="url(#rm)"/><polygon points="1633.2,996.5 1618.9,1002.0 1588.8,973.9 1600.1,971.0" fill="rgb(0,255,0)" stroke="rgb(0,255,0)" stroke-width="1" mask="url(#rm)"/><polygon points="1618.9,1002.0 1604.6,1007.5 1577.5,976.9 1588.8,973.9" fill="rgb(0,255,0)" stroke="rgb(0,255,0)" stroke-width="1" mask="url(#rm)"/><polygon points="1604.6,1007.5 1590.4,1011.4 1566.6,978.4 1577.5,976.9" fill="rgb(0,153,0)" stroke="rgb(0,153,0)" stroke-width="1" mask="url(#rm)"/><polygon points="1590.4,1011.4 1576.1,1015.3 1555.7,979.9 1566.6,978.4" fill="rgb(0,153,0)" stroke="rgb(0,153,0)" stroke-width="1" mask="url(#rm)"/><polygon points="1576.1,1015.3 1561.7,1019.2 1544.6,981.5 1555.7,979.9" fill="rgb(0,153,0)" stroke="rgb(0,153,0)" stroke-width="1" mask="url(#rm)"/><polygon points="1561.7,1019.2 1547.7,1021.4 1534.3,981.5 1544.6,981.5" fill="rgb(0,255,0)" stroke="rgb(0,255,0)" stroke-width="1" mask="url(#rm)"/><polygon points="1547.7,1021.4 1533.7,1023.6 1523.9,981.5 1534.3,981.5" fill="rgb(0,255,0)" stroke="rgb(0,255,0)" stroke-width="1" mask="url(#rm)"/><polygon points="1533.7,1023.6 1519.5,1025.8 1513.4,981.5 1523.9,981.5" fill="rgb(0,255,0)" stroke="rgb(0,255,0)" stroke-width="1" mask="url(#rm)"/><polygon points="1519.5,1025.8 1506.2,1026.1 1503.9,980.0 1513.4,981.5" fill="rgb(0,153,0)" stroke="rgb(0,153,0)" stroke-width="1" mask="url(#rm)"/><polygon points="1506.2,1026.1 1492.7,1026.5 1494.4,978.5 1503.9,980.0" fill="rgb(0,153,0)" stroke="rgb(0,153,0)" stroke-width="1" mask="url(#rm)"/><polygon points="1492.7,1026.5 1479.0,1026.8 1484.7,976.9 1494.4,978.5" fill="rgb(0,153,0)" stroke="rgb(0,153,0)" stroke-width="1" mask="url(#rm)"/><polygon points="1479.0,1026.8 1466.6,1025.2 1476.4,973.7 1484.7,976.9" fill="rgb(0,255,0)" stroke="rgb(0,255,0)" stroke-width="1" mask="url(#rm)"/><polygon points="1466.6,1025.2 1454.1,1023.5 1468.0,970.6 1476.4,973.7" fill="rgb(0,255,0)" stroke="rgb(0,255,0)" stroke-width="1" mask="url(#rm)"/><polygon points="1454.1,1023.5 1441.4,1021.8 1459.5,967.4 1468.0,970.6" fill="rgb(0,255,0)" stroke="rgb(0,255,0)" stroke-width="1" mask="url(#rm)"/><polygon points="1441.4,1021.8 1430.3,1018.1 1452.7,962.6 1459.5,967.4" fill="rgb(0,153,0)" stroke="rgb(0,153,0)" stroke-width="1" mask="url(#rm)"/><polygon points="1430.3,1018.1 1419.1,1014.4 1445.7,957.8 1452.7,962.6" fill="rgb(0,153,0)" stroke="rgb(0,153,0)" stroke-width="1" mask="url(#rm)"/><polygon points="1419.1,1014.4 1407.7,1010.6 1438.7,953.0 1445.7,957.8" fill="rgb(0,153,0)" stroke="rgb(0,153,0)" stroke-width="1" mask="url(#rm)"/><polygon points="1407.7,1010.6 1398.4,1004.8 1433.6,946.7 1438.7,953.0" fill="rgb(0,255,0)" stroke="rgb(0,255,0)" stroke-width="1" mask="url(#rm)"/><polygon points="1398.4,1004.8 1388.9,999.0 1428.4,940.3 1433.6,946.7" fill="rgb(0,255,0)" stroke="rgb(0,255,0)" stroke-width="1" mask="url(#rm)"/><polygon points="1388.9,999.0 1379.3,993.0 1423.2,933.9 1428.4,940.3" fill="rgb(0,255,0)" stroke="rgb(0,255,0)" stroke-width="1" mask="url(#rm)"/><polygon points="1379.3,993.0 1372.1,985.2 1420.1,926.1 1423.2,933.9" fill="rgb(0,153,0)" stroke="rgb(0,153,0)" stroke-width="1" mask="url(#rm)"/><polygon points="1372.1,985.2 1364.8,977.2 1416.9,918.3 1420.1,926.1" fill="rgb(0,153,0)" stroke="rgb(0,153,0)" stroke-width="1" mask="url(#rm)"/><polygon points="1364.8,977.2 1357.4,969.1 1413.8,910.4 1416.9,918.3" fill="rgb(0,153,0)" stroke="rgb(0,153,0)" stroke-width="1" mask="url(#rm)"/><polygon points="1357.4,969.1 1352.8,959.2 1412.9,901.4 1413.8,910.4" fill="rgb(0,255,0)" stroke="rgb(0,255,0)" stroke-width="1" mask="url(#rm)"/><polygon points="1352.8,959.2 1348.1,949.2 1412.0,892.3 1412.9,901.4" fill="rgb(0,255,0)" stroke="rgb(0,255,0)" stroke-width="1" mask="url(#rm)"/><polygon points="1348.1,949.2 1343.3,939.1 1411.2,883.0 1412.0,892.3" fill="rgb(0,255,0)" stroke="rgb(0,255,0)" stroke-width="1" mask="url(#rm)"/></g><g opacity="0.5"><polygon points="1787.7,1054.6 1787.4,1042.8 1746.7,956.6 1748.4,967.9" fill="rgb(153,0,0)" stroke="rgb(153,0,0)" stroke-width="1"/><polygon points="1787.4,1042.8 1787.1,1030.7 1744.9,945.2 1746.7,956.6" fill="rgb(153,0,0)" stroke="rgb(153,0,0)" stroke-width="1"/><polygon points="1787.1,1030.7 1786.8,1018.4 1743.1,933.7 1744.9,945.2" fill="rgb(153,0,0)" stroke="rgb(153,0,0)" stroke-width="1"/><polygon points="1786.8,1018.4 1784.7,1003.7 1740.1,920.8 1743.1,933.7" fill="rgb(255,0,0)" stroke="rgb(255,0,0)" stroke-width="1"/><polygon points="1784.7,1003.7 1782.6,988.7 1737.0,907.8 1740.1,920.8" fill="rgb(255,0,0)" stroke="rgb(255,0,0)" stroke-width="1"/><polygon points="1782.6,988.7 1780.4,973.5 1734.0,894.7 1737.0,907.8" fill="rgb(255,0,0)" stroke="rgb(255,0,0)" stroke-width="1"/><polygon points="1780.4,973.5 1776.6,956.3 1729.7,880.6 1734.0,894.7" fill="rgb(153,0,0)" stroke="rgb(153,0,0)" stroke-width="1"/><polygon points="1776.6,956.3 1772.6,938.9 1725.5,866.4 1729.7,880.6" fill="rgb(153,0,0)" stroke="rgb(153,0,0)" stroke-width="1"/><polygon points="1772.6,938.9 1768.7,921.3 1721.2,852.2 1725.5,866.4" fill="rgb(153,0,0)" stroke="rgb(153,0,0)" stroke-width="1"/><polygon points="1768.7,921.3 1763.1,902.2 1715.9,837.5 1721.2,852.2" fill="rgb(255,0,0)" stroke="rgb(255,0,0)" stroke-width="1"/><polygon points="1763.1,902.2 1757.4,883.1 1710.6,822.7 1715.9,837.5" fill="rgb(255,0,0)" stroke="rgb(255,0,0)" stroke-width="1"/><polygon points="1757.4,883.1 1751.7,863.8 1705.3,808.0 1710.6,822.7" fill="rgb(255,0,0)" stroke="rgb(255,0,0)" stroke-width="1"/><polygon points="1751.7,863.8 1744.6,843.8 1699.2,793.3 1705.3,808.0" fill="rgb(153,0,0)" stroke="rgb(153,0,0)" stroke-width="1"/><polygon points="1744.6,843.8 1737.4,823.8 1693.0,778.6 1699.2,793.3" fill="rgb(153,0,0)" stroke="rgb(153,0,0)" stroke-width="1"/><polygon points="1737.4,823.8 1730.3,803.7 1686.9,764.0 1693.0,778.6" fill="rgb(153,0,0)" stroke="rgb(153,0,0)" stroke-width="1"/><polygon points="1730.3,803.7 1721.9,783.7 1680.2,750.0 1686.9,764.0" fill="rgb(255,0,0)" stroke="rgb(255,0,0)" stroke-width="1"/><polygon points="1721.9,783.7 1713.6,763.7 1673.5,736.1 1680.2,750.0" fill="rgb(255,0,0)" stroke="rgb(255,0,0)" stroke-width="1"/><polygon points="1713.6,763.7 1705.2,743.8 1666.8,722.2 1673.5,736.1" fill="rgb(255,0,0)" stroke="rgb(255,0,0)" stroke-width="1"/><polygon points="1705.2,743.8 1696.1,724.8 1659.9,709.5 1666.8,722.2" fill="rgb(153,0,0)" stroke="rgb(153,0,0)" stroke-width="1" mask="url(#rm)"/><polygon points="1696.1,724.8 1686.9,705.9 1652.9,696.9 1659.9,709.5" fill="rgb(153,0,0)" stroke="rgb(153,0,0)" stroke-width="1" mask="url(#rm)"/><polygon points="1686.9,705.9 1677.8,687.1 1646.0,684.3 1652.9,696.9" fill="rgb(153,0,0)" stroke="rgb(153,0,0)" stroke-width="1" mask="url(#rm)"/><polygon points="1677.8,687.1 1668.3,670.0 1639.1,673.4 1646.0,684.3" fill="rgb(255,0,0)" stroke="rgb(255,0,0)" stroke-width="1" mask="url(#rm)"/><polygon points="1668.3,670.0 1658.9,653.1 1632.2,662.6 1639.1,673.4" fill="rgb(255,0,0)" stroke="rgb(255,0,0)" stroke-width="1" mask="url(#rm)"/><polygon points="1658.9,653.1 1649.5,636.3 1625.3,651.9 1632.2,662.6" fill="rgb(255,0,0)" stroke="rgb(255,0,0)" stroke-width="1" mask="url(#rm)"/><polygon points="1649.5,636.3 1640.0,621.8 1618.7,643.2 1625.3,651.9" fill="rgb(153,0,0)" stroke="rgb(153,0,0)" stroke-width="1" mask="url(#rm)"/><polygon points="1640.0,621.8 1630.7,607.5 1612.1,634.6 1618.7,643.2" fill="rgb(153,0,0)" stroke="rgb(153,0,0)" stroke-width="1" mask="url(#rm)"/><polygon points="1630.7,607.5 1621.5,593.4 1605.6,626.1 1612.1,634.6" fill="rgb(153,0,0)" stroke="rgb(153,0,0)" stroke-width="1" mask="url(#rm)"/><polygon points="1621.5,593.4 1612.6,582.1 1599.5,619.8 1605.6,626.1" fill="rgb(255,0,0)" stroke="rgb(255,0,0)" stroke-width="1" mask="url(#rm)"/><polygon points="1612.6,582.1 1603.8,571.0 1593.5,613.6 1599.5,619.8" fill="rgb(255,0,0)" stroke="rgb(255,0,0)" stroke-width="1" mask="url(#rm)"/><polygon points="1603.8,571.0 1595.1,560.0 1587.5,607.5 1593.5,613.6" fill="rgb(255,0,0)" stroke="rgb(255,0,0)" stroke-width="1" mask="url(#rm)"/><polygon points="1595.1,560.0 1587.1,552.2 1582.2,603.7 1587.5,607.5" fill="rgb(153,0,0)" stroke="rgb(153,0,0)" stroke-width="1" mask="url(#rm)"/><polygon points="1587.1,552.2 1579.2,544.5 1577.0,600.1 1582.2,603.7" fill="rgb(153,0,0)" stroke="rgb(153,0,0)" stroke-width="1" mask="url(#rm)"/><polygon points="1579.2,544.5 1571.4,536.9 1571.8,596.5 1577.0,600.1" fill="rgb(153,0,0)" stroke="rgb(153,0,0)" stroke-width="1" mask="url(#rm)"/><polygon points="1571.4,536.9 1564.4,532.7 1567.4,595.3 1571.8,596.5" fill="rgb(255,0,0)" stroke="rgb(255,0,0)" stroke-width="1" mask="url(#rm)"/><polygon points="1564.4,532.7 1557.6,528.5 1563.0,594.1 1567.4,595.3" fill="rgb(255,0,0)" stroke="rgb(255,0,0)" stroke-width="1" mask="url(#rm)"/><polygon points="1557.6,528.5 1551.0,524.3 1558.7,592.9 1563.0,594.1" fill="rgb(255,0,0)" stroke="rgb(255,0,0)" stroke-width="1" mask="url(#rm)"/><polygon points="1551.0,524.3 1545.4,523.5 1555.3,594.1 1558.7,592.9" fill="rgb(153,0,0)" stroke="rgb(153,0,0)" stroke-width="1" mask="url(#rm)"/><polygon points="1545.4,523.5 1539.9,522.6 1552.0,595.3 1555.3,594.1" fill="rgb(153,0,0)" stroke="rgb(153,0,0)" stroke-width="1" mask="url(#rm)"/><polygon points="1539.9,522.6 1534.4,521.8 1548.6,596.5 1552.0,595.3" fill="rgb(153,0,0)" stroke="rgb(153,0,0)" stroke-width="1" mask="url(#rm)"/><polygon points="1534.4,521.8 1530.2,524.1 1546.3,600.0 1548.6,596.5" fill="rgb(255,0,0)" stroke="rgb(255,0,0)" stroke-width="1" mask="url(#rm)"/><polygon points="1530.2,524.1 1526.1,526.4 1543.9,603.3 1546.3,600.0" fill="rgb(255,0,0)" stroke="rgb(255,0,0)" stroke-width="1" mask="url(#rm)"/><polygon points="1526.1,526.4 1522.0,528.6 1541.6,606.7 1543.9,603.3" fill="rgb(255,0,0)" stroke="rgb(255,0,0)" stroke-width="1" mask="url(#rm)"/><polygon points="1522.0,528.6 1519.2,533.8 1540.3,612.1 1541.6,606.7" fill="rgb(153,0,0)" stroke="rgb(153,0,0)" stroke-width="1" mask="url(#rm)"/><polygon points="1519.2,533.8 1516.4,538.8 1539.0,617.4 1540.3,612.1" fill="rgb(153,0,0)" stroke="rgb(153,0,0)" stroke-width="1" mask="url(#rm)"/><polygon points="1516.4,538.8 1513.7,543.7 1537.7,622.6 1539.0,617.4" fill="rgb(153,0,0)" stroke="rgb(153,0,0)" stroke-width="1" mask="url(#rm)"/><polygon points="1513.7,543.7 1512.3,551.3 1537.4,629.7 1537.7,622.6" fill="rgb(255,0,0)" stroke="rgb(255,0,0)" stroke-width="1" mask="url(#rm)"/><polygon points="1512.3,551.3 1510.8,558.7 1537.1,636.7 1537.4,629.7" fill="rgb(255,0,0)" stroke="rgb(255,0,0)" stroke-width="1" mask="url(#rm)"/><polygon points="1510.8,558.7 1509.4,566.0 1536.8,643.6 1537.1,636.7" fill="rgb(255,0,0)" stroke="rgb(255,0,0)" stroke-width="1" mask="url(#rm)"/><polygon points="1509.4,566.0 1509.3,575.6 1537.4,652.0 1536.8,643.6" fill="rgb(153,0,0)" stroke="rgb(153,0,0)" stroke-width="1" mask="url(#rm)"/><polygon points="1509.3,575.6 1509.1,585.0 1538.1,660.4 1537.4,652.0" fill="rgb(153,0,0)" stroke="rgb(153,0,0)" stroke-width="1" mask="url(#rm)"/><polygon points="1509.1,585.0 1509.0,594.3 1538.7,668.7 1538.1,660.4" fill="rgb(153,0,0)" stroke="rgb(153,0,0)" stroke-width="1" mask="url(#rm)"/><polygon points="1509.0,594.3 1510.0,605.5 1540.2,678.3 1538.7,668.7" fill="rgb(255,0,0)" stroke="rgb(255,0,0)" stroke-width="1" mask="url(#rm)"/><polygon points="1510.0,605.5 1511.1,616.6 1541.7,687.8 1540.2,678.3" fill="rgb(255,0,0)" stroke="rgb(255,0,0)" stroke-width="1" mask="url(#rm)"/><polygon points="1511.1,616.6 1512.1,627.4 1543.3,697.2 1541.7,687.8" fill="rgb(255,0,0)" stroke="rgb(255,0,0)" stroke-width="1" mask="url(#rm)"/><polygon points="1512.1,627.4 1514.2,639.9 1545.6,707.6 1543.3,697.2" fill="rgb(153,0,0)" stroke="rgb(153,0,0)" stroke-width="1" mask="url(#rm)"/><polygon points="1514.2,639.9 1516.3,652.2 1547.9,717.9 1545.6,707.6" fill="rgb(153,0,0)" stroke="rgb(153,0,0)" stroke-width="1" mask="url(#rm)"/><polygon points="1516.3,652.2 1518.4,664.4 1550.2,728.2 1547.9,717.9" fill="rgb(153,0,0)" stroke="rgb(153,0,0)" stroke-width="1" mask="url(#rm)"/><polygon points="1518.4,664.4 1521.5,677.8 1553.3,739.2 1550.2,728.2" fill="rgb(255,0,0)" stroke="rgb(255,0,0)" stroke-width="1" mask="url(#rm)"/><polygon points="1521.5,677.8 1524.6,691.0 1556.4,750.1 1553.3,739.2" fill="rgb(255,0,0)" stroke="rgb(255,0,0)" stroke-width="1" mask="url(#rm)"/><polygon points="1524.6,691.0 1527.6,704.1 1559.4,761.0 1556.4,750.1" fill="rgb(255,0,0)" stroke="rgb(255,0,0)" stroke-width="1" mask="url(#rm)"/><polygon points="1527.6,704.1 1531.6,718.1 1563.1,772.3 1559.4,761.0" fill="rgb(153,0,0)" stroke="rgb(153,0,0)" stroke-width="1" mask="url(#rm)"/><polygon points="1531.6,718.1 1535.5,731.9 1566.8,783.6 1563.1,772.3" fill="rgb(153,0,0)" stroke="rgb(153,0,0)" stroke-width="1" mask="url(#rm)"/><polygon points="1535.5,731.9 1539.4,745.7 1570.4,794.8 1566.8,783.6" fill="rgb(153,0,0)" stroke="rgb(153,0,0)" stroke-width="1" mask="url(#rm)"/><polygon points="1539.4,745.7 1544.1,760.0 1574.7,806.2 1570.4,794.8" fill="rgb(255,0,0)" stroke="rgb(255,0,0)" stroke-width="1" mask="url(#rm)"/><polygon points="1544.1,760.0 1548.8,774.2 1578.9,817.6 1574.7,806.2" fill="rgb(255,0,0)" stroke="rgb(255,0,0)" stroke-width="1" mask="url(#rm)"/><polygon points="1548.8,774.2 1553.5,788.4 1583.2,829.0 1578.9,817.6" fill="rgb(255,0,0)" stroke="rgb(255,0,0)" stroke-width="1" mask="url(#rm)"/><polygon points="1553.5,788.4 1558.9,802.7 1587.9,840.2 1583.2,829.0" fill="rgb(153,0,0)" stroke="rgb(153,0,0)" stroke-width="1" mask="url(#rm)"/><polygon points="1558.9,802.7 1564.2,817.0 1592.6,851.5 1587.9,840.2" fill="rgb(153,0,0)" stroke="rgb(153,0,0)" stroke-width="1" mask="url(#rm)"/><polygon points="1564.2,817.0 1569.6,831.3 1597.3,862.8 1592.6,851.5" fill="rgb(153,0,0)" stroke="rgb(153,0,0)" stroke-width="1" mask="url(#rm)"/><polygon points="1569.6,831.3 1575.5,845.5 1602.3,873.7 1597.3,862.8" fill="rgb(255,0,0)" stroke="rgb(255,0,0)" stroke-width="1" mask="url(#rm)"/><polygon points="1575.5,845.5 1581.4,859.6 1607.4,884.6 1602.3,873.7" fill="rgb(255,0,0)" stroke="rgb(255,0,0)" stroke-width="1" mask="url(#rm)"/><polygon points="1581.4,859.6 1587.3,873.8 1612.5,895.6 1607.4,884.6" fill="rgb(255,0,0)" stroke="rgb(255,0,0)" stroke-width="1" mask="url(#rm)"/><polygon points="1587.3,873.8 1593.6,887.5 1617.8,905.9 1612.5,895.6" fill="rgb(153,0,0)" stroke="rgb(153,0,0)" stroke-width="1" mask="url(#rm)"/><polygon points="1593.6,887.5 1600.0,901.3 1623.2,916.2 1617.8,905.9" fill="rgb(153,0,0)" stroke="rgb(153,0,0)" stroke-width="1" mask="url(#rm)"/><polygon points="1600.0,901.3 1606.4,915.1 1628.5,926.6 1623.2,916.2" fill="rgb(153,0,0)" stroke="rgb(153,0,0)" stroke-width="1" mask="url(#rm)"/><polygon points="1606.4,915.1 1613.1,928.1 1634.0,936.1 1628.5,926.6" fill="rgb(255,0,0)" stroke="rgb(255,0,0)" stroke-width="1" mask="url(#rm)"/><polygon points="1613.1,928.1 1619.8,941.2 1639.5,945.7 1634.0,936.1" fill="rgb(255,0,0)" stroke="rgb(255,0,0)" stroke-width="1" mask="url(#rm)"/><polygon points="1619.8,941.2 1626.5,954.4 1645.0,955.3 1639.5,945.7" fill="rgb(255,0,0)" stroke="rgb(255,0,0)" stroke-width="1" mask="url(#rm)"/><polygon points="1626.5,954.4 1633.4,966.5 1650.6,963.8 1645.0,955.3" fill="rgb(153,0,0)" stroke="rgb(153,0,0)" stroke-width="1" mask="url(#rm)"/><polygon points="1633.4,966.5 1640.4,978.7 1656.1,972.3 1650.6,963.8" fill="rgb(153,0,0)" stroke="rgb(153,0,0)" stroke-width="1" mask="url(#rm)"/><polygon points="1640.4,978.7 1647.4,991.0 1661.7,981.0 1656.1,972.3" fill="rgb(153,0,0)" stroke="rgb(153,0,0)" stroke-width="1" mask="url(#rm)"/><polygon points="1647.4,991.0 1654.4,1001.9 1667.2,988.2 1661.7,981.0" fill="rgb(255,0,0)" stroke="rgb(255,0,0)" stroke-width="1" mask="url(#rm)"/><polygon points="1654.4,1001.9 1661.4,1013.0 1672.6,995.4 1667.2,988.2" fill="rgb(255,0,0)" stroke="rgb(255,0,0)" stroke-width="1" mask="url(#rm)"/><polygon points="1661.4,1013.0 1668.6,1024.1 1678.2,1002.8 1672.6,995.4" fill="rgb(255,0,0)" stroke="rgb(255,0,0)" stroke-width="1" mask="url(#rm)"/><polygon points="1668.6,1024.1 1675.5,1033.6 1683.4,1008.5 1678.2,1002.8" fill="rgb(153,0,0)" stroke="rgb(153,0,0)" stroke-width="1" mask="url(#rm)"/><polygon points="1675.5,1033.6 1682.5,1043.2 1688.7,1014.3 1683.4,1008.5" fill="rgb(153,0,0)" stroke="rgb(153,0,0)" stroke-width="1" mask="url(#rm)"/><polygon points="1682.5,1043.2 1689.7,1052.9 1694.0,1020.2 1688.7,1014.3" fill="rgb(153,0,0)" stroke="rgb(153,0,0)" stroke-width="1" mask="url(#rm)"/><polygon points="1689.7,1052.9 1696.4,1060.5 1698.9,1024.2 1694.0,1020.2" fill="rgb(255,0,0)" stroke="rgb(255,0,0)" stroke-width="1" mask="url(#rm)"/><polygon points="1696.4,1060.5 1703.3,1068.4 1703.8,1028.2 1698.9,1024.2" fill="rgb(255,0,0)" stroke="rgb(255,0,0)" stroke-width="1" mask="url(#rm)"/><polygon points="1703.3,1068.4 1710.2,1076.3 1708.8,1032.3 1703.8,1028.2" fill="rgb(255,0,0)" stroke="rgb(255,0,0)" stroke-width="1" mask="url(#rm)"/><polygon points="1710.2,1076.3 1716.6,1081.9 1713.2,1034.4 1708.8,1032.3" fill="rgb(153,0,0)" stroke="rgb(153,0,0)" stroke-width="1" mask="url(#rm)"/><polygon points="1716.6,1081.9 1723.1,1087.6 1717.6,1036.5 1713.2,1034.4" fill="rgb(153,0,0)" stroke="rgb(153,0,0)" stroke-width="1" mask="url(#rm)"/><polygon points="1723.1,1087.6 1729.7,1093.5 1722.0,1038.6 1717.6,1036.5" fill="rgb(153,0,0)" stroke="rgb(153,0,0)" stroke-width="1" mask="url(#rm)"/><polygon points="1729.7,1093.5 1735.5,1096.7 1725.7,1038.6 1722.0,1038.6" fill="rgb(255,0,0)" stroke="rgb(255,0,0)" stroke-width="1" mask="url(#rm)"/><polygon points="1735.5,1096.7 1741.4,1100.0 1729.5,1038.5 1725.7,1038.6" fill="rgb(255,0,0)" stroke="rgb(255,0,0)" stroke-width="1" mask="url(#rm)"/><polygon points="1741.4,1100.0 1747.5,1103.4 1733.3,1038.5 1729.5,1038.5" fill="rgb(255,0,0)" stroke="rgb(255,0,0)" stroke-width="1" mask="url(#rm)"/><polygon points="1747.5,1103.4 1752.5,1104.0 1736.1,1036.2 1733.3,1038.5" fill="rgb(153,0,0)" stroke="rgb(153,0,0)" stroke-width="1" mask="url(#rm)"/><polygon points="1752.5,1104.0 1757.6,1104.6 1739.0,1033.8 1736.1,1036.2" fill="rgb(153,0,0)" stroke="rgb(153,0,0)" stroke-width="1" mask="url(#rm)"/><polygon points="1757.6,1104.6 1762.9,1105.2 1741.9,1031.4 1739.0,1033.8" fill="rgb(153,0,0)" stroke="rgb(153,0,0)" stroke-width="1" mask="url(#rm)"/><polygon points="1762.9,1105.2 1766.9,1102.8 1743.8,1026.8 1741.9,1031.4" fill="rgb(255,0,0)" stroke="rgb(255,0,0)" stroke-width="1" mask="url(#rm)"/><polygon points="1766.9,1102.8 1771.0,1100.4 1745.7,1022.1 1743.8,1026.8" fill="rgb(255,0,0)" stroke="rgb(255,0,0)" stroke-width="1" mask="url(#rm)"/><polygon points="1771.0,1100.4 1775.2,1098.0 1747.6,1017.3 1745.7,1022.1" fill="rgb(255,0,0)" stroke="rgb(255,0,0)" stroke-width="1" mask="url(#rm)"/><polygon points="1775.2,1098.0 1778.0,1092.5 1748.4,1010.3 1747.6,1017.3" fill="rgb(153,0,0)" stroke="rgb(153,0,0)" stroke-width="1" mask="url(#rm)"/><polygon points="1778.0,1092.5 1780.8,1086.9 1749.1,1003.2 1748.4,1010.3" fill="rgb(153,0,0)" stroke="rgb(153,0,0)" stroke-width="1"/><polygon points="1780.8,1086.9 1783.7,1081.2 1749.9,995.9 1749.1,1003.2" fill="rgb(153,0,0)" stroke="rgb(153,0,0)" stroke-width="1"/><polygon points="1783.7,1081.2 1785.0,1072.5 1749.4,986.7 1749.9,995.9" fill="rgb(255,0,0)" stroke="rgb(255,0,0)" stroke-width="1"/><polygon points="1785.0,1072.5 1786.4,1063.6 1748.9,977.3 1749.4,986.7" fill="rgb(255,0,0)" stroke="rgb(255,0,0)" stroke-width="1"/><polygon points="1786.4,1063.6 1787.7,1054.6 1748.4,967.9 1748.9,977.3" fill="rgb(255,0,0)" stroke="rgb(255,0,0)" stroke-width="1"/></g><g opacity="0.5"><polygon points="1343.3,939.1 1351.5,952.1 1442.3,948.8 1433.5,940.0" fill="rgb(0,0,255)" stroke="rgb(0,0,255)" stroke-width="1" mask="url(#rm)"/><polygon points="1351.5,952.1 1359.8,965.4 1451.3,957.6 1442.3,948.8" fill="rgb(0,0,255)" stroke="rgb(0,0,255)" stroke-width="1" mask="url(#rm)"/><polygon points="1359.8,965.4 1368.1,978.8 1460.3,966.5 1451.3,957.6" fill="rgb(0,0,255)" stroke="rgb(0,0,255)" stroke-width="1" mask="url(#rm)"/><polygon points="1368.1,978.8 1379.5,990.6 1471.3,973.9 1460.3,966.5" fill="rgb(0,0,153)" stroke="rgb(0,0,153)" stroke-width="1" mask="url(#rm)"/><polygon points="1379.5,990.6 1391.0,1002.5 1482.3,981.3 1471.3,973.9" fill="rgb(0,0,153)" stroke="rgb(0,0,153)" stroke-width="1"/><polygon points="1391.0,1002.5 1402.7,1014.6 1493.4,988.8 1482.3,981.3" fill="rgb(0,0,153)" stroke="rgb(0,0,153)" stroke-width="1"/><polygon points="1402.7,1014.6 1417.0,1024.6 1506.2,994.5 1493.4,988.8" fill="rgb(0,0,255)" stroke="rgb(0,0,255)" stroke-width="1"/><polygon points="1417.0,1024.6 1431.5,1034.7 1519.0,1000.1 1506.2,994.5" fill="rgb(0,0,255)" stroke="rgb(0,0,255)" stroke-width="1"/><polygon points="1431.5,1034.7 1446.1,1044.8 1531.9,1005.9 1519.0,1000.1" fill="rgb(0,0,255)" stroke="rgb(0,0,255)" stroke-width="1"/><polygon points="1446.1,1044.8 1462.9,1052.6 1545.9,1009.6 1531.9,1005.9" fill="rgb(0,0,153)" stroke="rgb(0,0,153)" stroke-width="1"/><polygon points="1462.9,1052.6 1479.8,1060.3 1560.1,1013.3 1545.9,1009.6" fill="rgb(0,0,153)" stroke="rgb(0,0,153)" stroke-width="1"/><polygon points="1479.8,1060.3 1496.9,1068.2 1574.2,1017.0 1560.1,1013.3" fill="rgb(0,0,153)" stroke="rgb(0,0,153)" stroke-width="1"/><polygon points="1496.9,1068.2 1515.6,1073.2 1589.1,1018.5 1574.2,1017.0" fill="rgb(0,0,255)" stroke="rgb(0,0,255)" stroke-width="1"/><polygon points="1515.6,1073.2 1534.4,1078.3 1604.0,1020.0 1589.1,1018.5" fill="rgb(0,0,255)" stroke="rgb(0,0,255)" stroke-width="1"/><polygon points="1534.4,1078.3 1553.3,1083.4 1619.0,1021.6 1604.0,1020.0" fill="rgb(0,0,255)" stroke="rgb(0,0,255)" stroke-width="1"/><polygon points="1553.3,1083.4 1573.2,1085.5 1634.1,1020.9 1619.0,1021.6" fill="rgb(0,0,153)" stroke="rgb(0,0,153)" stroke-width="1"/><polygon points="1573.2,1085.5 1593.2,1087.6 1649.2,1020.2 1634.1,1020.9" fill="rgb(0,0,153)" stroke="rgb(0,0,153)" stroke-width="1"/><polygon points="1593.2,1087.6 1613.1,1089.8 1664.3,1019.5 1649.2,1020.2" fill="rgb(0,0,153)" stroke="rgb(0,0,153)" stroke-width="1"/><polygon points="1613.1,1089.8 1633.4,1088.8 1679.1,1016.6 1664.3,1019.5" fill="rgb(0,0,255)" stroke="rgb(0,0,255)" stroke-width="1"/><polygon points="1633.4,1088.8 1653.6,1087.9 1693.8,1013.7 1679.1,1016.6" fill="rgb(0,0,255)" stroke="rgb(0,0,255)" stroke-width="1"/><polygon points="1653.6,1087.9 1673.8,1086.9 1708.5,1010.8 1693.8,1013.7" fill="rgb(0,0,255)" stroke="rgb(0,0,255)" stroke-width="1"/><polygon points="1673.8,1086.9 1693.5,1082.9 1722.4,1005.8 1708.5,1010.8" fill="rgb(0,0,153)" stroke="rgb(0,0,153)" stroke-width="1"/><polygon points="1693.5,1082.9 1713.2,1078.9 1736.2,1000.9 1722.4,1005.8" fill="rgb(0,0,153)" stroke="rgb(0,0,153)" stroke-width="1"/><polygon points="1713.2,1078.9 1732.8,1075.0 1749.9,995.9 1736.2,1000.9" fill="rgb(0,0,153)" stroke="rgb(0,0,153)" stroke-width="1"/><polygon points="1732.8,1075.0 1751.2,1068.1 1762.3,989.1 1749.9,995.9" fill="rgb(0,0,255)" stroke="rgb(0,0,255)" stroke-width="1"/><polygon points="1751.2,1068.1 1769.5,1061.4 1774.7,982.3 1762.3,989.1" fill="rgb(0,0,255)" stroke="rgb(0,0,255)" stroke-width="1"/><polygon points="1769.5,1061.4 1787.7,1054.6 1786.9,975.6 1774.7,982.3" fill="rgb(0,0,255)" stroke="rgb(0,0,255)" stroke-width="1"/><polygon points="1787.7,1054.6 1804.1,1045.3 1797.5,967.2 1786.9,975.6" fill="rgb(0,0,153)" stroke="rgb(0,0,153)" stroke-width="1"/><polygon points="1804.1,1045.3 1820.4,1036.0 1808.0,958.8 1797.5,967.2" fill="rgb(0,0,153)" stroke="rgb(0,0,153)" stroke-width="1"/><polygon points="1820.4,1036.0 1836.5,1026.8 1818.4,950.5 1808.0,958.8" fill="rgb(0,0,153)" stroke="rgb(0,0,153)" stroke-width="1"/><polygon points="1836.5,1026.8 1850.3,1015.4 1826.8,940.9 1818.4,950.5" fill="rgb(0,0,255)" stroke="rgb(0,0,255)" stroke-width="1"/><polygon points="1850.3,1015.4 1864.0,1004.1 1835.1,931.4 1826.8,940.9" fill="rgb(0,0,255)" stroke="rgb(0,0,255)" stroke-width="1"/><polygon points="1864.0,1004.1 1877.5,992.9 1843.3,922.0 1835.1,931.4" fill="rgb(0,0,255)" stroke="rgb(0,0,255)" stroke-width="1"/><polygon points="1877.5,992.9 1888.2,980.0 1849.3,911.5 1843.3,922.0" fill="rgb(0,0,153)" stroke="rgb(0,0,153)" stroke-width="1" mask="url(#rm)"/><polygon points="1888.2,980.0 1898.9,967.2 1855.2,901.2 1849.3,911.5" fill="rgb(0,0,153)" stroke="rgb(0,0,153)" stroke-width="1" mask="url(#rm)"/><polygon points="1898.9,967.2 1909.4,954.5 1861.1,890.9 1855.2,901.2" fill="rgb(0,0,153)" stroke="rgb(0,0,153)" stroke-width="1" mask="url(#rm)"/><polygon points="1909.4,954.5 1916.8,940.6 1864.6,880.0 1861.1,890.9" fill="rgb(0,0,255)" stroke="rgb(0,0,255)" stroke-width="1" mask="url(#rm)"/><polygon points="1916.8,940.6 1924.2,926.8 1868.0,869.2 1864.6,880.0" fill="rgb(0,0,255)" stroke="rgb(0,0,255)" stroke-width="1" mask="url(#rm)"/><polygon points="1924.2,926.8 1931.5,913.2 1871.4,858.6 1868.0,869.2" fill="rgb(0,0,255)" stroke="rgb(0,0,255)" stroke-width="1" mask="url(#rm)"/><polygon points="1931.5,913.2 1935.6,898.8 1872.3,847.6 1871.4,858.6" fill="rgb(0,0,153)" stroke="rgb(0,0,153)" stroke-width="1" mask="url(#rm)"/><polygon points="1935.6,898.8 1939.6,884.5 1873.3,836.7 1872.3,847.6" fill="rgb(0,0,153)" stroke="rgb(0,0,153)" stroke-width="1" mask="url(#rm)"/><polygon points="1939.6,884.5 1943.6,870.5 1874.2,826.0 1873.3,836.7" fill="rgb(0,0,153)" stroke="rgb(0,0,153)" stroke-width="1" mask="url(#rm)"/><polygon points="1943.6,870.5 1944.4,856.1 1872.7,815.3 1874.2,826.0" fill="rgb(0,0,255)" stroke="rgb(0,0,255)" stroke-width="1" mask="url(#rm)"/><polygon points="1944.4,856.1 1945.1,841.8 1871.3,804.7 1872.7,815.3" fill="rgb(0,0,255)" stroke="rgb(0,0,255)" stroke-width="1" mask="url(#rm)"/><polygon points="1945.1,841.8 1945.9,827.8 1869.8,794.2 1871.3,804.7" fill="rgb(0,0,255)" stroke="rgb(0,0,255)" stroke-width="1" mask="url(#rm)"/><polygon points="1945.9,827.8 1943.5,813.9 1866.1,784.0 1869.8,794.2" fill="rgb(0,0,153)" stroke="rgb(0,0,153)" stroke-width="1" mask="url(#rm)"/><polygon points="1943.5,813.9 1941.1,800.2 1862.3,774.0 1866.1,784.0" fill="rgb(0,0,153)" stroke="rgb(0,0,153)" stroke-width="1" mask="url(#rm)"/><polygon points="1941.1,800.2 1938.8,786.6 1858.6,764.1 1862.3,774.0" fill="rgb(0,0,153)" stroke="rgb(0,0,153)" stroke-width="1" mask="url(#rm)"/><polygon points="1938.8,786.6 1933.5,773.5 1852.8,754.7 1858.6,764.1" fill="rgb(0,0,255)" stroke="rgb(0,0,255)" stroke-width="1" mask="url(#rm)"/><polygon points="1933.5,773.5 1928.3,760.6 1847.0,745.5 1852.8,754.7" fill="rgb(0,0,255)" stroke="rgb(0,0,255)" stroke-width="1" mask="url(#rm)"/><polygon points="1928.3,760.6 1923.1,747.9 1841.3,736.4 1847.0,745.5" fill="rgb(0,0,255)" stroke="rgb(0,0,255)" stroke-width="1" mask="url(#rm)"/><polygon points="1923.1,747.9 1915.2,736.0 1833.6,728.1 1841.3,736.4" fill="rgb(0,0,153)" stroke="rgb(0,0,153)" stroke-width="1" mask="url(#rm)"/><polygon points="1915.2,736.0 1907.4,724.2 1826.0,719.9 1833.6,728.1" fill="rgb(0,0,153)" stroke="rgb(0,0,153)" stroke-width="1" mask="url(#rm)"/><polygon points="1907.4,724.2 1899.7,712.6 1818.4,711.8 1826.0,719.9" fill="rgb(0,0,153)" stroke="rgb(0,0,153)" stroke-width="1" mask="url(#rm)"/><polygon points="1899.7,712.6 1889.5,702.1 1809.2,704.8 1818.4,711.8" fill="rgb(0,0,255)" stroke="rgb(0,0,255)" stroke-width="1" mask="url(#rm)"/><polygon points="1889.5,702.1 1879.5,691.8 1800.0,697.8 1809.2,704.8" fill="rgb(0,0,255)" stroke="rgb(0,0,255)" stroke-width="1" mask="url(#rm)"/><polygon points="1879.5,691.8 1869.6,681.5 1790.9,690.9 1800.0,697.8" fill="rgb(0,0,255)" stroke="rgb(0,0,255)" stroke-width="1" mask="url(#rm)"/><polygon points="1869.6,681.5 1857.5,672.7 1780.4,685.2 1790.9,690.9" fill="rgb(0,0,153)" stroke="rgb(0,0,153)" stroke-width="1" mask="url(#rm)"/><polygon points="1857.5,672.7 1845.6,663.9 1769.9,679.6 1780.4,685.2" fill="rgb(0,0,153)" stroke="rgb(0,0,153)" stroke-width="1" mask="url(#rm)"/><polygon points="1845.6,663.9 1833.7,655.2 1759.5,674.0 1769.9,679.6" fill="rgb(0,0,153)" stroke="rgb(0,0,153)" stroke-width="1" mask="url(#rm)"/><polygon points="1833.7,655.2 1820.1,648.1 1748.0,669.8 1759.5,674.0" fill="rgb(0,0,255)" stroke="rgb(0,0,255)" stroke-width="1" mask="url(#rm)"/><polygon points="1820.1,648.1 1806.6,641.0 1736.5,665.6 1748.0,669.8" fill="rgb(0,0,255)" stroke="rgb(0,0,255)" stroke-width="1" mask="url(#rm)"/><polygon points="1806.6,641.0 1793.3,634.1 1725.1,661.5 1736.5,665.6" fill="rgb(0,0,255)" stroke="rgb(0,0,255)" stroke-width="1" mask="url(#rm)"/><polygon points="1793.3,634.1 1778.5,628.8 1712.9,658.8 1725.1,661.5" fill="rgb(0,0,153)" stroke="rgb(0,0,153)" stroke-width="1" mask="url(#rm)"/><polygon points="1778.5,628.8 1763.8,623.6 1700.7,656.1 1712.9,658.8" fill="rgb(0,0,153)" stroke="rgb(0,0,153)" stroke-width="1" mask="url(#rm)"/><polygon points="1763.8,623.6 1749.2,618.4 1688.6,653.5 1700.7,656.1" fill="rgb(0,0,153)" stroke="rgb(0,0,153)" stroke-width="1" mask="url(#rm)"/><polygon points="1749.2,618.4 1733.7,615.1 1675.9,652.4 1688.6,653.5" fill="rgb(0,0,255)" stroke="rgb(0,0,255)" stroke-width="1" mask="url(#rm)"/><polygon points="1733.7,615.1 1718.2,611.8 1663.3,651.3 1675.9,652.4" fill="rgb(0,0,255)" stroke="rgb(0,0,255)" stroke-width="1" mask="url(#rm)"/><polygon points="1718.2,611.8 1702.7,608.5 1650.8,650.2 1663.3,651.3" fill="rgb(0,0,255)" stroke="rgb(0,0,255)" stroke-width="1" mask="url(#rm)"/><polygon points="1702.7,608.5 1686.7,607.2 1638.0,650.7 1650.8,650.2" fill="rgb(0,0,153)" stroke="rgb(0,0,153)" stroke-width="1" mask="url(#rm)"/><polygon points="1686.7,607.2 1670.7,605.8 1625.3,651.2 1638.0,650.7" fill="rgb(0,0,153)" stroke="rgb(0,0,153)" stroke-width="1" mask="url(#rm)"/><polygon points="1670.7,605.8 1654.7,604.4 1612.6,651.7 1625.3,651.2" fill="rgb(0,0,153)" stroke="rgb(0,0,153)" stroke-width="1" mask="url(#rm)"/><polygon points="1654.7,604.4 1638.5,605.1 1600.1,653.7 1612.6,651.7" fill="rgb(0,0,255)" stroke="rgb(0,0,255)" stroke-width="1" mask="url(#rm)"/><polygon points="1638.5,605.1 1622.4,605.7 1587.5,655.8 1600.1,653.7" fill="rgb(0,0,255)" stroke="rgb(0,0,255)" stroke-width="1" mask="url(#rm)"/><polygon points="1622.4,605.7 1606.2,606.3 1574.9,657.9 1587.5,655.8" fill="rgb(0,0,255)" stroke="rgb(0,0,255)" stroke-width="1" mask="url(#rm)"/><polygon points="1606.2,606.3 1590.3,608.8 1562.9,661.5 1574.9,657.9" fill="rgb(0,0,153)" stroke="rgb(0,0,153)" stroke-width="1" mask="url(#rm)"/><polygon points="1590.3,608.8 1574.3,611.4 1550.8,665.1 1562.9,661.5" fill="rgb(0,0,153)" stroke="rgb(0,0,153)" stroke-width="1" mask="url(#rm)"/><polygon points="1574.3,611.4 1558.3,614.0 1538.7,668.7 1550.8,665.1" fill="rgb(0,0,153)" stroke="rgb(0,0,153)" stroke-width="1" mask="url(#rm)"/><polygon points="1558.3,614.0 1543.0,618.4 1527.4,673.8 1538.7,668.7" fill="rgb(0,0,255)" stroke="rgb(0,0,255)" stroke-width="1" mask="url(#rm)"/><polygon points="1543.0,618.4 1527.6,622.9 1516.1,678.8 1527.4,673.8" fill="rgb(0,0,255)" stroke="rgb(0,0,255)" stroke-width="1" mask="url(#rm)"/><polygon points="1527.6,622.9 1512.1,627.4 1504.7,684.0 1516.1,678.8" fill="rgb(0,0,255)" stroke="rgb(0,0,255)" stroke-width="1" mask="url(#rm)"/><polygon points="1512.1,627.4 1497.6,633.8 1494.5,690.4 1504.7,684.0" fill="rgb(0,0,153)" stroke="rgb(0,0,153)" stroke-width="1" mask="url(#rm)"/><polygon points="1497.6,633.8 1483.1,640.1 1484.3,696.9 1494.5,690.4" fill="rgb(0,0,153)" stroke="rgb(0,0,153)" stroke-width="1" mask="url(#rm)"/><polygon points="1483.1,640.1 1468.5,646.5 1474.0,703.4 1484.3,696.9" fill="rgb(0,0,153)" stroke="rgb(0,0,153)" stroke-width="1" mask="url(#rm)"/><polygon points="1468.5,646.5 1455.3,654.6 1465.1,711.1 1474.0,703.4" fill="rgb(0,0,255)" stroke="rgb(0,0,255)" stroke-width="1" mask="url(#rm)"/><polygon points="1455.3,654.6 1442.1,662.7 1456.2,718.8 1465.1,711.1" fill="rgb(0,0,255)" stroke="rgb(0,0,255)" stroke-width="1" mask="url(#rm)"/><polygon points="1442.1,662.7 1428.7,670.9 1447.3,726.6 1456.2,718.8" fill="rgb(0,0,255)" stroke="rgb(0,0,255)" stroke-width="1" mask="url(#rm)"/><polygon points="1428.7,670.9 1417.2,680.6 1440.0,735.4 1447.3,726.6" fill="rgb(0,0,153)" stroke="rgb(0,0,153)" stroke-width="1" mask="url(#rm)"/><polygon points="1417.2,680.6 1405.5,690.4 1432.8,744.3 1440.0,735.4" fill="rgb(0,0,153)" stroke="rgb(0,0,153)" stroke-width="1" mask="url(#rm)"/><polygon points="1405.5,690.4 1393.7,700.3 1425.4,753.2 1432.8,744.3" fill="rgb(0,0,153)" stroke="rgb(0,0,153)" stroke-width="1" mask="url(#rm)"/><polygon points="1393.7,700.3 1384.2,711.4 1420.1,762.9 1425.4,753.2" fill="rgb(0,0,255)" stroke="rgb(0,0,255)" stroke-width="1" mask="url(#rm)"/><polygon points="1384.2,711.4 1374.5,722.6 1414.7,772.6 1420.1,762.9" fill="rgb(0,0,255)" stroke="rgb(0,0,255)" stroke-width="1" mask="url(#rm)"/><polygon points="1374.5,722.6 1364.8,734.0 1409.3,782.5 1414.7,772.6" fill="rgb(0,0,255)" stroke="rgb(0,0,255)" stroke-width="1" mask="url(#rm)"/><polygon points="1364.8,734.0 1357.5,746.4 1406.1,792.8 1409.3,782.5" fill="rgb(0,0,153)" stroke="rgb(0,0,153)" stroke-width="1" mask="url(#rm)"/><polygon points="1357.5,746.4 1350.2,758.9 1402.9,803.2 1406.1,792.8" fill="rgb(0,0,153)" stroke="rgb(0,0,153)" stroke-width="1" mask="url(#rm)"/><polygon points="1350.2,758.9 1342.8,771.5 1399.6,813.7 1402.9,803.2" fill="rgb(0,0,153)" stroke="rgb(0,0,153)" stroke-width="1" mask="url(#rm)"/><polygon points="1342.8,771.5 1338.2,784.8 1398.7,824.4 1399.6,813.7" fill="rgb(0,0,255)" stroke="rgb(0,0,255)" stroke-width="1" mask="url(#rm)"/><polygon points="1338.2,784.8 1333.6,798.3 1397.8,835.2 1398.7,824.4" fill="rgb(0,0,255)" stroke="rgb(0,0,255)" stroke-width="1" mask="url(#rm)"/><polygon points="1333.6,798.3 1328.9,811.9 1396.9,846.1 1397.8,835.2" fill="rgb(0,0,255)" stroke="rgb(0,0,255)" stroke-width="1" mask="url(#rm)"/><polygon points="1328.9,811.9 1327.3,825.8 1398.4,856.9 1396.9,846.1" fill="rgb(0,0,153)" stroke="rgb(0,0,153)" stroke-width="1" mask="url(#rm)"/><polygon points="1327.3,825.8 1325.6,839.9 1400.0,867.7 1398.4,856.9" fill="rgb(0,0,153)" stroke="rgb(0,0,153)" stroke-width="1" mask="url(#rm)"/><polygon points="1325.6,839.9 1323.9,854.1 1401.5,878.7 1400.0,867.7" fill="rgb(0,0,153)" stroke="rgb(0,0,153)" stroke-width="1" mask="url(#rm)"/><polygon points="1323.9,854.1 1325.5,868.2 1405.6,889.2 1401.5,878.7" fill="rgb(0,0,255)" stroke="rgb(0,0,255)" stroke-width="1" mask="url(#rm)"/><polygon points="1325.5,868.2 1327.0,882.5 1409.7,899.7 1405.6,889.2" fill="rgb(0,0,255)" stroke="rgb(0,0,255)" stroke-width="1" mask="url(#rm)"/><polygon points="1327.0,882.5 1328.6,897.0 1413.8,910.4 1409.7,899.7" fill="rgb(0,0,255)" stroke="rgb(0,0,255)" stroke-width="1" mask="url(#rm)"/><polygon points="1328.6,897.0 1333.4,910.8 1420.3,920.2 1413.8,910.4" fill="rgb(0,0,153)" stroke="rgb(0,0,153)" stroke-width="1" mask="url(#rm)"/><polygon points="1333.4,910.8 1338.3,924.9 1426.9,930.1 1420.3,920.2" fill="rgb(0,0,153)" stroke="rgb(0,0,153)" stroke-width="1" mask="url(#rm)"/><polygon points="1338.3,924.9 1343.3,939.1 1433.5,940.0 1426.9,930.1" fill="rgb(0,0,153)" stroke="rgb(0,0,153)" stroke-width="1" mask="url(#rm)"/></g><polygon points="1401.5,889.0 1405.4,900.7 1410.5,913.8 1416.2,926.4 1421.5,936.7 1425.7,943.1 1428.1,944.6 1428.4,940.9 1426.4,932.4 1422.5,920.4 1417.1,906.8 1411.3,893.7 1405.8,883.3 1401.7,877.2 1399.4,876.2 1399.4,880.3" fill="rgb(140,0,0)" fill-opacity="0.5" mask="url(#rm)"/><polygon points="1301.1,911.9 1308.4,931.4 1317.2,953.2 1326.3,974.5 1334.6,992.1 1340.7,1003.5 1343.7,1006.9 1343.0,1001.4 1338.6,987.6 1331.2,967.4 1321.8,944.0 1312.0,921.4 1303.5,903.4 1297.6,892.7 1295.2,890.8 1296.5,897.6" fill="rgb(140,0,0)" fill-opacity="0.5" mask="url(#rm)"/><polygon points="1401.7,877.2 1399.4,876.2 1304.9,914.0 1306.4,915.3" fill="rgb(132,0,0)" fill-opacity="0.5" mask="url(#rm)"/><polygon points="1428.1,944.6 1428.4,940.9 1333.5,980.2 1334.0,983.7" fill="rgb(147,0,0)" fill-opacity="0.5" mask="url(#rm)"/><polygon points="1297.6,892.7 1295.2,890.8 1221.7,988.5" fill="rgb(132,0,0)" fill-opacity="0.5" mask="url(#rm)"/><polygon points="1343.7,1006.9 1343.0,1001.4 1221.7,988.5" fill="rgb(145,0,0)" fill-opacity="0.5" mask="url(#rm)"/><polygon points="1405.8,883.3 1401.7,877.2 1306.4,915.3 1310.0,921.8" fill="rgb(184,0,0)" fill-opacity="0.5" mask="url(#rm)"/><polygon points="1428.4,940.9 1426.4,932.4 1330.8,971.8 1333.5,980.2" fill="rgb(197,0,0)" fill-opacity="0.5" mask="url(#rm)"/><polygon points="1303.5,903.4 1297.6,892.7 1221.7,988.5" fill="rgb(176,0,0)" fill-opacity="0.5" mask="url(#rm)"/><polygon points="1411.3,893.7 1405.8,883.3 1310.0,921.8 1315.0,932.6" fill="rgb(225,0,0)" fill-opacity="0.5" mask="url(#rm)"/><polygon points="1343.0,1001.4 1338.6,987.6 1221.7,988.5" fill="rgb(187,0,0)" fill-opacity="0.5" mask="url(#rm)"/><polygon points="1426.4,932.4 1422.5,920.4 1326.4,959.8 1330.8,971.8" fill="rgb(234,0,0)" fill-opacity="0.5" mask="url(#rm)"/><polygon points="1417.1,906.8 1411.3,893.7 1315.0,932.6 1320.8,946.0" fill="rgb(250,0,0)" fill-opacity="0.5" mask="url(#rm)"/><polygon points="1422.5,920.4 1417.1,906.8 1320.8,946.0 1326.4,959.8" fill="rgb(253,0,0)" fill-opacity="0.5" mask="url(#rm)"/><polygon points="1312.0,921.4 1303.5,903.4 1221.7,988.5" fill="rgb(212,0,0)" fill-opacity="0.5" mask="url(#rm)"/><polygon points="1338.6,987.6 1331.2,967.4 1221.7,988.5" fill="rgb(219,0,0)" fill-opacity="0.5" mask="url(#rm)"/><polygon points="1321.8,944.0 1312.0,921.4 1221.7,988.5" fill="rgb(233,0,0)" fill-opacity="0.5" mask="url(#rm)"/><polygon points="1331.2,967.4 1321.8,944.0 1221.7,988.5" fill="rgb(235,0,0)" fill-opacity="0.5" mask="url(#rm)"/><polygon points="1716.5,1015.1 1721.6,1020.4 1730.9,1021.9 1743.0,1019.4 1756.0,1013.5 1768.1,1005.0 1777.4,995.1 1782.7,985.2 1783.1,976.9 1778.4,971.3 1769.3,969.5 1757.0,971.7 1743.5,977.7 1731.0,986.6 1721.5,996.8 1716.4,1006.9" fill="rgb(0,140,0)" fill-opacity="0.5"/><polygon points="1783.1,976.9 1778.4,971.3 1830.5,1049.7 1835.0,1054.8" fill="rgb(0,122,0)" fill-opacity="0.5"/><polygon points="1716.4,1006.9 1716.5,1015.1 1766.4,1094.9 1766.7,1086.9" fill="rgb(0,150,0)" fill-opacity="0.5"/><polygon points="1778.4,971.3 1769.3,969.5 1821.4,1048.3 1830.5,1049.7" fill="rgb(0,169,0)" fill-opacity="0.5"/><polygon points="1721.5,996.8 1716.4,1006.9 1766.7,1086.9 1772.2,1077.0" fill="rgb(0,194,0)" fill-opacity="0.5"/><polygon points="1743.3,1108.4 1751.8,1116.2 1767.4,1117.7 1787.7,1112.8 1809.7,1102.3 1830.2,1087.9 1846.5,1071.4 1856.2,1055.2 1857.7,1041.6 1850.5,1032.8 1835.4,1030.3 1814.6,1034.7 1791.4,1045.5 1769.5,1060.9 1752.7,1078.5 1743.5,1095.2" fill="rgb(0,140,0)" fill-opacity="0.5"/><polygon points="1769.3,969.5 1757.0,971.7 1809.0,1051.0 1821.4,1048.3" fill="rgb(0,208,0)" fill-opacity="0.5"/><polygon points="1731.0,986.6 1721.5,996.8 1772.2,1077.0 1782.3,1066.6" fill="rgb(0,225,0)" fill-opacity="0.5"/><polygon points="1757.0,971.7 1743.5,977.7 1795.2,1057.5 1809.0,1051.0" fill="rgb(0,233,0)" fill-opacity="0.5"/><polygon points="1743.5,977.7 1731.0,986.6 1782.3,1066.6 1795.2,1057.5" fill="rgb(0,239,0)" fill-opacity="0.5"/><polygon points="1743.3,1108.4 1751.8,1116.2 1855.3,1159.3" fill="rgb(0,134,0)" fill-opacity="0.5"/><polygon points="1857.7,1041.6 1850.5,1032.8 1855.3,1159.3" fill="rgb(0,151,0)" fill-opacity="0.5"/><polygon points="1743.5,1095.2 1743.3,1108.4 1855.3,1159.3" fill="rgb(0,176,0)" fill-opacity="0.5"/><polygon points="1850.5,1032.8 1835.4,1030.3 1855.3,1159.3" fill="rgb(0,193,0)" fill-opacity="0.5"/><polygon points="1752.7,1078.5 1743.5,1095.2 1855.3,1159.3" fill="rgb(0,214,0)" fill-opacity="0.5"/><polygon points="1835.4,1030.3 1814.6,1034.7 1855.3,1159.3" fill="rgb(0,227,0)" fill-opacity="0.5"/><polygon points="1769.5,1060.9 1752.7,1078.5 1855.3,1159.3" fill="rgb(0,241,0)" fill-opacity="0.5"/><polygon points="1814.6,1034.7 1791.4,1045.5 1855.3,1159.3" fill="rgb(0,248,0)" fill-opacity="0.5"/><polygon points="1791.4,1045.5 1769.5,1060.9 1855.3,1159.3" fill="rgb(0,254,0)" fill-opacity="0.5"/><polygon points="1649.7,674.2 1660.0,665.5 1665.0,654.7 1663.8,643.7 1656.8,634.0 1645.2,627.1 1630.6,623.9 1615.3,625.0 1601.4,630.1 1591.0,638.5 1585.8,649.1 1586.5,660.2 1593.2,670.2 1604.9,677.4 1619.8,680.7 1635.6,679.6" fill="rgb(0,0,140)" fill-opacity="0.5" mask="url(#rm)"/><polygon points="1660.0,665.5 1665.0,654.7 1661.8,575.7 1656.6,586.6" fill="rgb(0,0,149)" fill-opacity="0.5" mask="url(#rm)"/><polygon points="1586.5,660.2 1593.2,670.2 1586.4,591.3 1579.4,581.3" fill="rgb(0,0,152)" fill-opacity="0.5" mask="url(#rm)"/><polygon points="1649.7,674.2 1660.0,665.5 1656.6,586.6 1645.8,595.4" fill="rgb(0,0,183)" fill-opacity="0.5" mask="url(#rm)"/><polygon points="1593.2,670.2 1604.9,677.4 1598.7,598.6 1586.4,591.3" fill="rgb(0,0,185)" fill-opacity="0.5" mask="url(#rm)"/><polygon points="1635.6,679.6 1649.7,674.2 1645.8,595.4 1630.9,600.8" fill="rgb(0,0,206)" fill-opacity="0.5" mask="url(#rm)"/><polygon points="1604.9,677.4 1619.8,680.7 1614.3,602.0 1598.7,598.6" fill="rgb(0,0,207)" fill-opacity="0.5" mask="url(#rm)"/><polygon points="1619.8,680.7 1635.6,679.6 1630.9,600.8 1614.3,602.0" fill="rgb(0,0,214)" fill-opacity="0.5" mask="url(#rm)"/><polygon points="1663.2,610.7 1681.2,595.8 1689.6,577.6 1687.4,559.1 1675.1,543.0 1654.8,531.6 1629.5,526.4 1603.0,528.1 1578.8,536.6 1560.6,550.6 1551.1,568.2 1552.0,586.9 1563.5,603.8 1584.0,616.1 1610.3,621.9 1638.3,619.9" fill="rgb(0,0,140)" fill-opacity="0.5" mask="url(#rm)"/><polygon points="1687.4,559.1 1675.1,543.0 1614.5,485.6" fill="rgb(0,0,126)" fill-opacity="0.5" mask="url(#rm)"/><polygon points="1560.6,550.6 1551.1,568.2 1614.5,485.6" fill="rgb(0,0,128)" fill-opacity="0.5" mask="url(#rm)"/><polygon points="1689.6,577.6 1687.4,559.1 1614.5,485.6" fill="rgb(0,0,160)" fill-opacity="0.5" mask="url(#rm)"/><polygon points="1551.1,568.2 1552.0,586.9 1614.5,485.6" fill="rgb(0,0,162)" fill-opacity="0.5" mask="url(#rm)"/><polygon points="1681.2,595.8 1689.6,577.6 1614.5,485.6" fill="rgb(0,0,194)" fill-opacity="0.5" mask="url(#rm)"/><polygon points="1552.0,586.9 1563.5,603.8 1614.5,485.6" fill="rgb(0,0,197)" fill-opacity="0.5" mask="url(#rm)"/><polygon points="1663.2,610.7 1681.2,595.8 1614.5,485.6" fill="rgb(0,0,224)" fill-opacity="0.5" mask="url(#rm)"/><polygon points="1563.5,603.8 1584.0,616.1 1614.5,485.6" fill="rgb(0,0,226)" fill-opacity="0.5" mask="url(#rm)"/><polygon points="1638.3,619.9 1663.2,610.7 1614.5,485.6" fill="rgb(0,0,245)" fill-opacity="0.5" mask="url(#rm)"/><polygon points="1584.0,616.1 1610.3,621.9 1614.5,485.6" fill="rgb(0,0,246)" fill-opacity="0.5" mask="url(#rm)"/><polygon points="1610.3,621.9 1638.3,619.9 1614.5,485.6" fill="rgb(0,0,253)" fill-opacity="0.5" mask="url(#rm)"/><path d="M1615.6 688.6 Q1590 710 1587.4 742.7 Q1588 752 1593.6 752" stroke="#5a5a5a" stroke-width="2.6" fill="none"/><path d="M1636 675 L1640 715" stroke="#a8a040" stroke-width="1.6"/><line x1="1600" y1="203" x2="1476" y2="237.5" stroke="#a80000" stroke-width="13" stroke-linecap="round"/><line x1="1600" y1="203" x2="1476" y2="237.5" stroke="#ff1414" stroke-width="7.8" stroke-linecap="round" transform="translate(0,-1.6)"/><line x1="1605" y1="201" x2="1666" y2="269" stroke="#007a00" stroke-width="11.5" stroke-linecap="round"/><line x1="1605" y1="201" x2="1666" y2="269" stroke="#00cc00" stroke-width="6.9" stroke-linecap="round" transform="translate(0,-1.4)"/><polygon points="1593,108 1606.6,108 1611.5,195 1598.8,197" fill="#00007a"/><polygon points="1596.5,108 1602.5,108 1606.5,196 1601,196" fill="#0000a4"/><line x1="1578" y1="279" x2="1485" y2="311" stroke="#a80000" stroke-width="12" stroke-linecap="round"/><line x1="1578" y1="279" x2="1485" y2="311" stroke="#ff1414" stroke-width="7.2" stroke-linecap="round" transform="translate(0,-1.4)"/><path d="M1609 338 Q1618 352 1620 372 L1621 386 L1613 386 L1612 372 Q1610 356 1604 341 Z" fill="#00a800"/><line x1="1595" y1="566" x2="1522" y2="592" stroke="#a80000" stroke-width="11" stroke-linecap="round"/><line x1="1595" y1="566" x2="1522" y2="592" stroke="#ff1414" stroke-width="6.6" stroke-linecap="round" transform="translate(0,-1.3)"/><line x1="1628.5" y1="705" x2="1628.5" y2="733" stroke="#00008a" stroke-width="9" stroke-linecap="round"/><line x1="1628.5" y1="705" x2="1628.5" y2="733" stroke="#1616dd" stroke-width="5.4" stroke-linecap="round" transform="translate(0,-1.1)"/><line x1="1637" y1="716" x2="1637" y2="744" stroke="#990000" stroke-width="9" stroke-linecap="round"/><line x1="1637" y1="716" x2="1637" y2="744" stroke="#ee1111" stroke-width="5.4" stroke-linecap="round" transform="translate(0,-1.1)"/><line x1="1598.3" y1="786.5" x2="1542" y2="808.5" stroke="#b00000" stroke-width="10" stroke-linecap="round"/><line x1="1598.3" y1="786.5" x2="1542" y2="808.5" stroke="#ff1a1a" stroke-width="6.0" stroke-linecap="round" transform="translate(0,-1.2)"/><line x1="1606" y1="798.3" x2="1549.8" y2="820.2" stroke="#00aa00" stroke-width="10" stroke-linecap="round"/><line x1="1606" y1="798.3" x2="1549.8" y2="820.2" stroke="#22ff22" stroke-width="6.0" stroke-linecap="round" transform="translate(0,-1.2)"/><line x1="1600" y1="834.3" x2="1548.2" y2="854.7" stroke="#b00000" stroke-width="10" stroke-linecap="round"/><line x1="1600" y1="834.3" x2="1548.2" y2="854.7" stroke="#ff1a1a" stroke-width="6.0" stroke-linecap="round" transform="translate(0,-1.2)"/></g></svg>
</body></html>
